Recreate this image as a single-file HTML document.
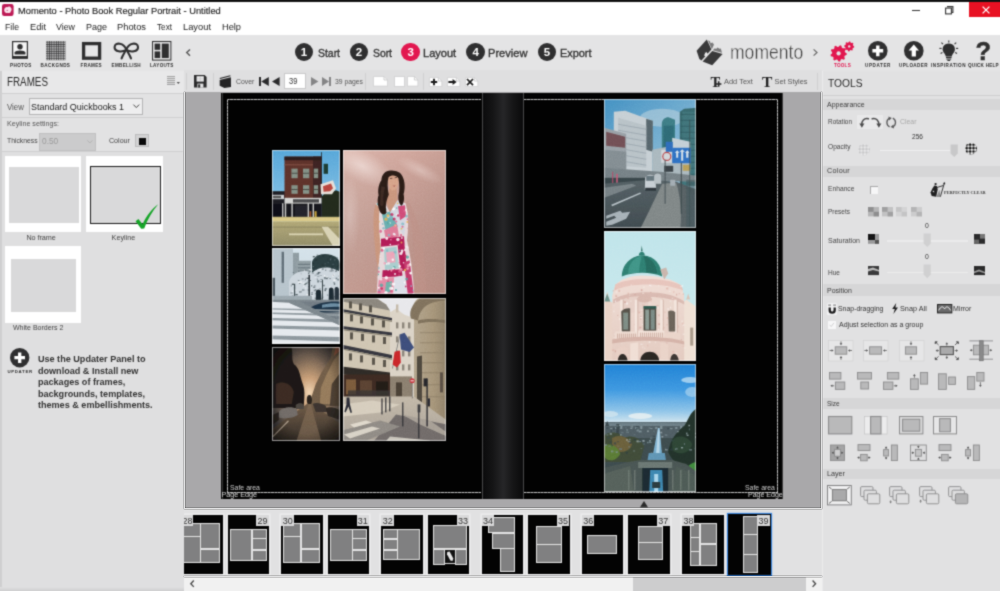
<!DOCTYPE html>
<html>
<head>
<meta charset="utf-8">
<title>Momento</title>
<style>
*{box-sizing:border-box;margin:0;padding:0}
html,body{width:1000px;height:591px;overflow:hidden;background:#e0e0e1;font-family:"Liberation Sans",sans-serif;color:#2b2b2b}
#app{position:relative;width:1000px;height:591px;overflow:hidden;filter:url(#appblur)}
.abs{position:absolute}
.t{position:absolute;white-space:nowrap;line-height:1.12;filter:grayscale(1)}
.t.c{filter:none}
svg{overflow:visible}
.ph{position:absolute;overflow:hidden;background:#888}
.ph::after{content:"";position:absolute;left:0;top:0;right:0;bottom:0;border:1.1px solid rgba(255,255,255,.55)}
.ph svg{position:absolute;left:0;top:0;overflow:hidden}
</style>
</head>
<body>
<svg width="0" height="0" style="position:absolute"><defs><filter id="appblur" x="0" y="0" width="100%" height="100%" color-interpolation-filters="sRGB"><feConvolveMatrix order="3" kernelMatrix="0.035 0.105 0.035 0.105 0.44 0.105 0.035 0.105 0.035" edgeMode="duplicate" preserveAlpha="true"/></filter></defs></svg>
<div id="app">
<!-- base -->
<div class="abs" style="left:0.0px;top:0.0px;width:1000.0px;height:1.5px;background:#111;"></div>
<div class="abs" style="left:0.0px;top:1.5px;width:1000.0px;height:33.5px;background:#ffffff;"></div>
<div class="abs" style="left:0.0px;top:35.0px;width:1000.0px;height:36.0px;background:#e4e4e5;"></div>
<div class="abs" style="left:0.0px;top:71.0px;width:184.0px;height:520.0px;background:#dfdfe0;"></div>
<div class="abs" style="left:184.0px;top:70.0px;width:638.0px;height:22.0px;background:#dfdfe0;"></div>
<div class="abs" style="left:0.0px;top:71.0px;width:184.0px;height:21.6px;background:#e8e8e9;"></div>
<div class="abs" style="left:0.0px;top:93.6px;width:184.0px;height:58.4px;background:#e2e2e3;"></div>
<div class="abs" style="left:184.6px;top:91.5px;width:636.4px;height:416.9px;background:#a9a8aa;"></div>
<div class="abs" style="left:184.0px;top:508.5px;width:638.0px;height:67.5px;background:#e1e1e2;"></div>
<div class="abs" style="left:184.0px;top:576.6px;width:638.0px;height:14.4px;background:#f1f1f1;"></div>
<div class="abs" style="left:822.0px;top:71.0px;width:178.0px;height:520.0px;background:#e1e1e2;"></div>
<!-- sec_title -->
<svg class="abs" style="left:2.0px;top:4.0px;" width="11.6" height="12.0" viewBox="0 0 11.60 12.00"><rect x="0" y="0" width="11.6" height="12" rx="2.2" fill="#bd1a55"/><path d="M2.2 6.6 C2 4 4 2.6 5.6 3.2 C6.4 2.2 8.4 2.4 8.8 3.8 C10 4.4 9.8 6.6 8.8 7.4 C8.6 8.8 6.8 9.4 5.6 8.8 C4 9.4 2.4 8.4 2.2 6.6 Z" fill="#fbe3ec"/><circle cx="5.2" cy="6.4" r="0.7" fill="#c85a84"/></svg>
<span class="t" style="left:18.2px;top:5.5px;font-size:9.8px;color:#222;transform:scaleX(0.950);transform-origin:0 50%;-webkit-text-stroke:0.15px #222;">Momento - Photo Book Regular Portrait - Untitled</span>
<span class="t" style="left:5.0px;top:21.8px;font-size:9.6px;color:#1c1c1c;transform:scaleX(0.905);transform-origin:0 50%;">File</span>
<span class="t" style="left:30.0px;top:21.8px;font-size:9.6px;color:#1c1c1c;transform:scaleX(0.967);transform-origin:0 50%;">Edit</span>
<span class="t" style="left:56.0px;top:21.8px;font-size:9.6px;color:#1c1c1c;transform:scaleX(0.921);transform-origin:0 50%;">View</span>
<span class="t" style="left:86.0px;top:21.8px;font-size:9.6px;color:#1c1c1c;transform:scaleX(0.937);transform-origin:0 50%;">Page</span>
<span class="t" style="left:117.0px;top:21.8px;font-size:9.6px;color:#1c1c1c;transform:scaleX(0.970);transform-origin:0 50%;">Photos</span>
<span class="t" style="left:157.0px;top:21.8px;font-size:9.6px;color:#1c1c1c;transform:scaleX(0.852);transform-origin:0 50%;">Text</span>
<span class="t" style="left:183.0px;top:21.8px;font-size:9.6px;color:#1c1c1c;transform:scaleX(0.972);transform-origin:0 50%;">Layout</span>
<span class="t" style="left:222.0px;top:21.8px;font-size:9.6px;color:#1c1c1c;transform:scaleX(0.962);transform-origin:0 50%;">Help</span>
<div class="abs" style="left:911.5px;top:9.6px;width:8.0px;height:1.2px;background:#333;"></div>
<svg class="abs" style="left:945.0px;top:5.5px;" width="8.5" height="8.5" viewBox="0 0 8.50 8.50"><path d="M2 0.6 H7.9 V6.5 H6.4" fill="none" stroke="#333" stroke-width="1.1"/><rect x="0.6" y="2.1" width="5.8" height="5.8" fill="#fff" stroke="#333" stroke-width="1.1"/></svg>
<div class="abs" style="left:968.8px;top:1.5px;width:31.2px;height:15.7px;background:#e81123;"></div>
<svg class="abs" style="left:981.5px;top:5.5px;" width="8.0" height="8.0" viewBox="0 0 8.00 8.00"><path d="M0.6 0.6 L7.4 7.4 M7.4 0.6 L0.6 7.4" stroke="#fff" stroke-width="1.3" fill="none"/></svg>
<!-- sec_toolbar -->
<svg class="abs" style="left:12.0px;top:41.2px;" width="16.0" height="17.8" viewBox="0 0 16.00 17.80"><rect x="0.6" y="0.6" width="14.8" height="16.6" fill="#f6f6f6" stroke="#2f2f30" stroke-width="1.2"/><circle cx="8" cy="5.8" r="2.7" fill="#2f2f30"/><path d="M2.6 13.6 V11.6 C2.6 8.8 13.4 8.8 13.4 11.6 V13.6 Z" fill="#2f2f30"/><rect x="0.6" y="15" width="14.8" height="2.6" fill="#2f2f30"/></svg>
<span class="t" style="left:10.0px;top:62.7px;font-size:4.6px;color:#2f2f30;letter-spacing:0.38px;font-weight:bold;">PHOTOS</span>
<svg class="abs" style="left:45.6px;top:41.0px;" width="19.4" height="19.0" viewBox="0 0 19.40 19.00"><defs><pattern id="chk" width="2.3" height="2.3" patternUnits="userSpaceOnUse"><polygon points="1.15,0 2.3,1.15 1.15,2.3 0,1.15" fill="#2a2a2b"/></pattern></defs><rect x="0.4" y="0.3" width="18.6" height="18.6" fill="#c4c4c5"/><rect x="0" y="0" width="19.4" height="19.2" fill="url(#chk)"/></svg>
<span class="t" style="left:40.6px;top:62.7px;font-size:4.6px;color:#2f2f30;letter-spacing:0.40px;font-weight:bold;">BACKGNDS</span>
<svg class="abs" style="left:81.6px;top:42.2px;" width="19.2" height="17.8" viewBox="0 0 19.20 17.80"><rect x="1.6" y="1.6" width="16" height="14.6" fill="#e6e6e7" stroke="#2f2f30" stroke-width="3.3"/></svg>
<span class="t" style="left:80.6px;top:62.7px;font-size:4.6px;color:#2f2f30;letter-spacing:0.33px;font-weight:bold;">FRAMES</span>
<svg class="abs" style="left:113.0px;top:41.0px;" width="26.6" height="18.5" viewBox="0 0 26.60 18.50"><g fill="none" stroke="#2f2f30" stroke-width="2.1" stroke-linecap="round" stroke-linejoin="round"><path d="M13.3 8.8 C11 1.5 2 0.8 1.6 6 C1.3 11 9 11.5 13.3 8.8 Z"/><path d="M13.3 8.8 C15.6 1.5 24.6 0.8 25 6 C25.3 11 17.6 11.5 13.3 8.8 Z"/><path d="M12.6 9.6 C11 12.5 9.6 14.5 8.6 17.4"/><path d="M14 9.6 C15.6 12.5 17 14.5 18 17.4"/></g></svg>
<span class="t" style="left:111.6px;top:62.7px;font-size:4.6px;color:#2f2f30;letter-spacing:0.31px;font-weight:bold;">EMBELLISH</span>
<svg class="abs" style="left:151.6px;top:41.0px;" width="19.4" height="19.6" viewBox="0 0 19.40 19.60"><rect x="0.5" y="0.5" width="18.4" height="18.6" fill="#e0e0e1" stroke="#2f2f30" stroke-width="1"/><rect x="2.6" y="2.6" width="5.6" height="6.2" fill="#2f2f30"/><rect x="2.6" y="10.4" width="5.6" height="6.6" fill="#2f2f30"/><rect x="9.8" y="2.6" width="7" height="14.4" fill="#2f2f30"/></svg>
<span class="t" style="left:150.0px;top:62.7px;font-size:4.6px;color:#2f2f30;letter-spacing:0.29px;font-weight:bold;">LAYOUTS</span>
<svg class="abs" style="left:186.4px;top:49.0px;" width="4.6" height="7.2" viewBox="0 0 4.60 7.20"><path d="M4 0.4 L0.7 3.6 L4 6.8" fill="none" stroke="#555" stroke-width="1.4"/></svg>
<div class="abs" style="left:294.6px;top:42.6px;width:18.8px;height:18.8px;border-radius:50%;background:#2f2f30"></div>
<span class="t" style="left:300.8px;top:45.8px;font-size:11.5px;color:#fff;font-weight:bold;">1</span>
<span class="t" style="left:318.0px;top:45.8px;font-size:11.6px;color:#333;transform:scaleX(0.898);transform-origin:0 50%;-webkit-text-stroke:0.35px #333;">Start</span>
<div class="abs" style="left:349.6px;top:42.6px;width:18.8px;height:18.8px;border-radius:50%;background:#2f2f30"></div>
<span class="t" style="left:355.8px;top:45.8px;font-size:11.5px;color:#fff;font-weight:bold;">2</span>
<span class="t" style="left:372.5px;top:45.8px;font-size:11.6px;color:#333;transform:scaleX(0.893);transform-origin:0 50%;-webkit-text-stroke:0.35px #333;">Sort</span>
<div class="abs" style="left:401.3px;top:42.6px;width:18.8px;height:18.8px;border-radius:50%;background:#e2174f"></div>
<span class="t" style="left:407.5px;top:45.8px;font-size:11.5px;color:#fff;font-weight:bold;">3</span>
<span class="t" style="left:422.8px;top:45.8px;font-size:11.6px;color:#333;transform:scaleX(0.953);transform-origin:0 50%;-webkit-text-stroke:0.35px #333;">Layout</span>
<div class="abs" style="left:466.3px;top:42.6px;width:18.8px;height:18.8px;border-radius:50%;background:#2f2f30"></div>
<span class="t" style="left:472.5px;top:45.8px;font-size:11.5px;color:#fff;font-weight:bold;">4</span>
<span class="t" style="left:488.0px;top:45.8px;font-size:11.6px;color:#333;transform:scaleX(0.957);transform-origin:0 50%;-webkit-text-stroke:0.35px #333;">Preview</span>
<div class="abs" style="left:537.6px;top:42.6px;width:18.8px;height:18.8px;border-radius:50%;background:#2f2f30"></div>
<span class="t" style="left:543.8px;top:45.8px;font-size:11.5px;color:#fff;font-weight:bold;">5</span>
<span class="t" style="left:559.5px;top:45.8px;font-size:11.6px;color:#333;transform:scaleX(0.940);transform-origin:0 50%;-webkit-text-stroke:0.35px #333;">Export</span>
<svg class="abs" style="left:695px;top:38px" width="30" height="30" viewBox="695 38 30 30"><g fill="#39393a"><path d="M696.6 50.7 L706.8 39.6 L711.4 49.6 L701.4 60.6 L699.4 59 Z"/><path d="M702.6 61.5 L712.2 50.9 L722.6 54 L712.2 65.2 Z"/></g><g fill="#7a7a7b"><path d="M708 40.6 L709.8 41 L710.6 43.2 L712.4 42.4 L714 44.6 L711.9 49.2 Z"/><path d="M712.8 50.2 L714.4 48.4 L716.4 48.8 L717.6 47.6 L719.4 48.8 L720.8 48.4 L722 52.8 Z"/></g><path d="M704 55.4 L705 53.6 L704.8 52.4 L705.9 52.8 L706.8 51.8 L707 53.2 L708 53.6 L706.6 55.4 L706.4 57 L705.2 56 Z" fill="#ececed"/></svg>
<span class="t" style="left:730.4px;top:41.7px;font-size:19.4px;color:#3c3c3d;transform:scaleX(0.905);transform-origin:0 50%;-webkit-text-stroke:0.4px #e4e4e5;">momento</span>
<svg class="abs" style="left:813.4px;top:49.3px;" width="4.8" height="7.0" viewBox="0 0 4.80 7.00"><path d="M0.6 0.4 L4 3.5 L0.6 6.6" fill="none" stroke="#666" stroke-width="1.2"/></svg>
<svg class="abs" style="left:830.5px;top:41.0px;" width="23.5" height="20.5" viewBox="0 0 23.50 20.50"><polygon points="15.80,12.40 15.68,13.82 13.76,14.64 13.28,15.68 13.88,17.67 12.87,18.68 10.88,18.08 9.84,18.56 9.02,20.48 7.60,20.60 6.46,18.86 5.36,18.56 3.50,19.50 2.33,18.68 2.57,16.62 1.92,15.68 -0.11,15.20 -0.48,13.82 1.04,12.40 1.14,11.26 -0.11,9.60 0.50,8.30 2.57,8.18 3.38,7.37 3.50,5.30 4.80,4.69 6.46,5.94 7.60,5.84 9.02,4.32 10.40,4.69 10.88,6.72 11.82,7.37 13.88,7.13 14.70,8.30 13.76,10.16 14.06,11.26" fill="#e2174f"/><circle cx="7.6" cy="12.4" r="2.1" fill="#e4e4e5"/><polygon points="23.20,5.40 23.10,6.38 21.90,6.93 21.53,7.62 21.74,8.94 20.98,9.56 19.73,9.10 18.98,9.32 18.20,10.40 17.22,10.30 16.67,9.10 15.98,8.73 14.66,8.94 14.04,8.18 14.50,6.93 14.28,6.18 13.20,5.40 13.30,4.42 14.50,3.87 14.87,3.18 14.66,1.86 15.42,1.24 16.67,1.70 17.42,1.48 18.20,0.40 19.18,0.50 19.73,1.70 20.42,2.07 21.74,1.86 22.36,2.62 21.90,3.87 22.12,4.62" fill="#e2174f"/><circle cx="18.2" cy="5.4" r="1.2" fill="#e4e4e5"/></svg>
<span class="t c" style="left:834.0px;top:62.7px;font-size:4.6px;color:#e2174f;letter-spacing:0.25px;font-weight:bold;">TOOLS</span>
<svg class="abs" style="left:868.0px;top:41.2px;" width="19.6" height="19.6" viewBox="0 0 19.60 19.60"><circle cx="9.8" cy="9.8" r="9.8" fill="#2f2f30"/><path d="M9.8 4.4 V15.2 M4.4 9.8 H15.2" stroke="#fff" stroke-width="3.4"/></svg>
<span class="t" style="left:865.0px;top:62.7px;font-size:4.6px;color:#2f2f30;letter-spacing:0.59px;font-weight:bold;">UPDATER</span>
<svg class="abs" style="left:904.0px;top:41.2px;" width="19.6" height="19.6" viewBox="0 0 19.60 19.60"><circle cx="9.8" cy="9.8" r="9.8" fill="#2f2f30"/><path d="M9.8 3.6 L15 9.6 H11.9 V15.6 H7.7 V9.6 H4.6 Z" fill="#fff"/></svg>
<span class="t" style="left:899.0px;top:62.7px;font-size:4.6px;color:#2f2f30;letter-spacing:0.40px;font-weight:bold;">UPLOADER</span>
<svg class="abs" style="left:940.0px;top:41.0px;" width="17.6" height="20.0" viewBox="0 0 17.60 20.00"><path d="M8.8 2.4 C3.6 2.4 2.2 6.6 2.8 9.4 C3.4 12 5.6 13 5.8 15.4 H11.8 C12 13 14.2 12 14.8 9.4 C15.4 6.6 14 2.4 8.8 2.4 Z" fill="#2f2f30"/><rect x="6" y="15.9" width="5.6" height="1.1" fill="#2f2f30"/><rect x="6.4" y="17.5" width="4.8" height="1.1" fill="#2f2f30"/><rect x="7.4" y="19" width="2.8" height="1" fill="#2f2f30"/><g stroke="#2f2f30" stroke-width="1.1"><path d="M8.8 -0.6 V1.4"/><path d="M1.4 1.6 L3 3.2"/><path d="M16.2 1.6 L14.6 3.2"/><path d="M-0.6 7.4 H1.6"/><path d="M16 7.4 H18.2"/><path d="M0.6 12.6 L2.4 11.6"/><path d="M17 12.6 L15.2 11.6"/></g></svg>
<span class="t" style="left:931.0px;top:62.7px;font-size:4.6px;color:#2f2f30;letter-spacing:0.52px;font-weight:bold;">INSPIRATION</span>
<span class="t" style="left:975.4px;top:36.9px;font-size:25.5px;color:#2f2f30;font-weight:bold;-webkit-text-stroke:0.5px #2f2f30;">?</span>
<span class="t" style="left:968.0px;top:62.7px;font-size:4.6px;color:#2f2f30;letter-spacing:0.26px;font-weight:bold;">QUICK HELP</span>
<!-- sec_left -->
<div class="abs" style="left:0.0px;top:71.0px;width:1.5px;height:520.0px;background:#cfcfd0;"></div>
<div class="abs" style="left:0.0px;top:587.0px;width:184.0px;height:4.0px;background:linear-gradient(#dfdfe0,#cfcfd0);"></div>
<span class="t" style="left:7.0px;top:75.5px;font-size:12.4px;color:#2a2a2a;transform:scaleX(0.793);transform-origin:0 50%;">FRAMES</span>
<svg class="abs" style="left:167.0px;top:77.0px;" width="14.0" height="9.0" viewBox="0 0 14.00 9.00"><g stroke="#858586" stroke-width="0.8"><path d="M0 -0.4 H8 M0 1.6 H8 M0 3.6 H8 M0 5.6 H8 M0 7.4 H8"/></g><path d="M9.6 5 H13 L11.3 7 Z" fill="#555"/></svg>
<div class="abs" style="left:2.0px;top:92.6px;width:181.0px;height:1.0px;background:#cfcfd0;"></div>
<span class="t" style="left:6.8px;top:103.0px;font-size:8.2px;color:#555;transform:scaleX(0.959);transform-origin:0 50%;">View</span>
<div class="abs" style="left:28.8px;top:98.2px;width:114.0px;height:17.0px;background:#eeeeef;border:1px solid #b4b4b5;"></div>
<span class="t" style="left:31.4px;top:101.8px;font-size:9.2px;color:#222;transform:scaleX(0.974);transform-origin:0 50%;">Standard Quickbooks 1</span>
<svg class="abs" style="left:133.0px;top:104.4px;" width="6.6" height="4.6" viewBox="0 0 6.60 4.60"><path d="M0.4 0.6 L3.3 3.6 L6.2 0.6" fill="none" stroke="#444" stroke-width="1"/></svg>
<div class="abs" style="left:2.0px;top:116.6px;width:181.0px;height:1.0px;background:#cfcfd0;"></div>
<span class="t" style="left:7.0px;top:119.7px;font-size:7.4px;color:#555;transform:scaleX(0.965);transform-origin:0 50%;">Keyline settings:</span>
<span class="t" style="left:7.0px;top:136.9px;font-size:8px;color:#444;transform:scaleX(0.850);transform-origin:0 50%;">Thickness</span>
<div class="abs" style="left:39.0px;top:132.8px;width:57.4px;height:17.8px;background:#cbcbcc;border:1px solid #c0c0c1;"></div>
<span class="t" style="left:42.4px;top:136.8px;font-size:8.6px;color:#9a9a9a;transform:scaleX(0.968);transform-origin:0 50%;">0.50</span>
<svg class="abs" style="left:86.6px;top:139.6px;" width="5.8" height="4.0" viewBox="0 0 5.80 4.00"><path d="M0.4 0.4 L2.9 3 L5.4 0.4" fill="none" stroke="#b0b0b0" stroke-width="0.9"/></svg>
<span class="t" style="left:109.3px;top:136.9px;font-size:8px;color:#444;transform:scaleX(0.887);transform-origin:0 50%;">Colour</span>
<div class="abs" style="left:135.3px;top:134.4px;width:13.5px;height:13.0px;background:#d2d2d3;border:1px solid #bdbdbe;"></div>
<div class="abs" style="left:138.7px;top:137.8px;width:7.3px;height:7.2px;background:#0a0a0a;"></div>
<div class="abs" style="left:2.0px;top:151.4px;width:181.0px;height:1.0px;background:#cfcfd0;"></div>
<div class="abs" style="left:5.0px;top:156.4px;width:76.2px;height:76.1px;background:#ffffff;"></div>
<div class="abs" style="left:8.5px;top:166.6px;width:70.0px;height:56.8px;background:#d9d9da;"></div>
<span class="t" style="left:26.4px;top:233.8px;font-size:7.2px;color:#444;letter-spacing:-0.03px;">No frame</span>
<div class="abs" style="left:86.3px;top:156.4px;width:77.1px;height:76.1px;background:#ffffff;"></div>
<div class="abs" style="left:90.3px;top:165.9px;width:70.4px;height:58.1px;background:#d9d9da;border:1px solid #1a1a1a;"></div>
<span class="t" style="left:111.6px;top:233.8px;font-size:7.2px;color:#444;letter-spacing:0.01px;">Keyline</span>
<svg class="abs" style="left:134.6px;top:203.8px;" width="23.8" height="25.2" viewBox="0 0 23.80 25.20"><path d="M0.6 17.2 L3.4 15 L7.6 20.2 C11.6 11.6 17 4.6 23.2 0.2 C17.6 7 12.4 15 9.2 24.6 L6.2 24.8 Z" fill="#16a528"/></svg>
<div class="abs" style="left:5.0px;top:246.0px;width:76.2px;height:76.9px;background:#ffffff;"></div>
<div class="abs" style="left:11.2px;top:258.6px;width:64.8px;height:53.4px;background:#d9d9da;"></div>
<span class="t" style="left:12.9px;top:324.2px;font-size:7.2px;color:#444;transform:scaleX(0.976);transform-origin:0 50%;">White Borders 2</span>
<svg class="abs" style="left:10.0px;top:348.0px;" width="19.4" height="19.4" viewBox="0 0 19.40 19.40"><circle cx="9.7" cy="9.7" r="9.7" fill="#2f2f30"/><path d="M9.7 4.4 V15 M4.4 9.7 H15" stroke="#fff" stroke-width="3.3"/></svg>
<span class="t" style="left:7.4px;top:369.7px;font-size:4.4px;color:#2f2f30;letter-spacing:0.64px;font-weight:bold;">UPDATER</span>
<span class="t" style="left:37.9px;top:354.1px;font-size:9.1px;color:#333;font-weight:bold;">Use the Updater Panel to</span>
<span class="t" style="left:37.9px;top:365.6px;font-size:9.1px;color:#333;font-weight:bold;">download &amp; Install new</span>
<span class="t" style="left:37.9px;top:377.1px;font-size:9.1px;color:#333;font-weight:bold;">packages of frames,</span>
<span class="t" style="left:37.9px;top:388.6px;font-size:9.1px;color:#333;font-weight:bold;">backgrounds, templates,</span>
<span class="t" style="left:37.9px;top:400.1px;font-size:9.1px;color:#333;font-weight:bold;">themes &amp; embellishments.</span>
<!-- sec_canvasbar -->
<div class="abs" style="left:186.0px;top:73.0px;width:1.0px;height:17.0px;background:#d0d0d1;"></div>
<div class="abs" style="left:213.4px;top:73.0px;width:1.0px;height:17.0px;background:#d0d0d1;"></div>
<svg class="abs" style="left:194.4px;top:75.0px;" width="12.6" height="12.6" viewBox="0 0 12.60 12.60"><path d="M0 0 H10.6 L12.6 2 V12.6 H0 Z" fill="#2a2a2b"/><rect x="2.6" y="1.2" width="7.2" height="5.4" fill="#ececed"/><path d="M6.2 1.2 V6.6 M2.6 3.9 H9.8" stroke="#b4b4b5" stroke-width="0.5"/><rect x="3.4" y="8.6" width="6" height="4" fill="#e4e4e5"/><rect x="4.2" y="9.4" width="2" height="3.2" fill="#2a2a2b"/></svg>
<svg class="abs" style="left:218px;top:74px" width="16" height="16" viewBox="218 74 16 16"><path d="M219.7 80 L230.9 77.3 L231 87 L224.4 88 L219.7 85.8 Z" fill="#232324"/><path d="M219.8 78.5 L230.4 75.7" stroke="#232324" stroke-width="1.1" fill="none"/></svg>
<span class="t" style="left:235.6px;top:77.8px;font-size:7.4px;color:#555;transform:scaleX(0.932);transform-origin:0 50%;">Cover</span>
<svg class="abs" style="left:259.4px;top:77.0px;" width="9.8" height="9.0" viewBox="0 0 9.80 9.00"><rect x="0" y="0" width="2" height="9" fill="#2a2a2b"/><path d="M9.8 0 V9 L2.2 4.5 Z" fill="#2a2a2b"/></svg>
<svg class="abs" style="left:272.4px;top:77.0px;" width="7.6" height="9.0" viewBox="0 0 7.60 9.00"><path d="M7.6 0 V9 L0 4.5 Z" fill="#2a2a2b"/></svg>
<div class="abs" style="left:283.6px;top:72.6px;width:22.8px;height:16.4px;background:#ffffff;border:1px solid #c9c9ca;"></div>
<span class="t" style="left:288.6px;top:76.2px;font-size:9.2px;color:#333;transform:scaleX(0.821);transform-origin:0 50%;">39</span>
<svg class="abs" style="left:310.6px;top:77.0px;" width="7.4" height="9.0" viewBox="0 0 7.40 9.00"><path d="M0 0 V9 L7.4 4.5 Z" fill="#858586"/></svg>
<svg class="abs" style="left:321.6px;top:77.0px;" width="9.0" height="9.0" viewBox="0 0 9.00 9.00"><path d="M0 0 V9 L7 4.5 Z" fill="#858586"/><rect x="7" y="0" width="2" height="9" fill="#858586"/></svg>
<span class="t" style="left:335.0px;top:77.9px;font-size:6.8px;color:#555;letter-spacing:0.00px;">39 pages</span>
<div class="abs" style="left:365.4px;top:73.0px;width:1.0px;height:17.0px;background:#d0d0d1;"></div>
<svg class="abs" style="left:373.3px;top:76.0px;" width="15.0" height="10.6" viewBox="0 0 15.00 10.60"><path d="M0.5 0.5 H11 L14.5 4 V10.1 H0.5 Z" fill="#ffffff" stroke="#cfcfd0" stroke-width="0.8"/><path d="M11 0.5 V4 H14.5" fill="none" stroke="#c4c4c5" stroke-width="0.8"/></svg>
<div class="abs" style="left:394.3px;top:76.0px;width:10.7px;height:10.6px;background:#ffffff;border:0.8px solid #d4d4d5;"></div>
<svg class="abs" style="left:407.4px;top:76.0px;" width="11.4" height="10.6" viewBox="0 0 11.40 10.60"><path d="M0.5 0.5 H7.4 L10.9 4 V10.1 H0.5 Z" fill="#ffffff" stroke="#cfcfd0" stroke-width="0.8"/><path d="M7.4 0.5 V4 H10.9" fill="none" stroke="#c4c4c5" stroke-width="0.8"/></svg>
<div class="abs" style="left:423.4px;top:73.0px;width:1.0px;height:17.0px;background:#d0d0d1;"></div>
<svg class="abs" style="left:429.3px;top:77.0px;" width="13.3" height="10.0" viewBox="0 0 13.30 10.00"><path d="M0.5 0.5 H9.3 L12.8 4 V9.5 H0.5 Z" fill="#ffffff" stroke="#cfcfd0" stroke-width="0.8"/><path d="M9.3 0.5 V4 H12.8" fill="none" stroke="#c4c4c5" stroke-width="0.8"/><path d="M1.8 5 H8.2 M5 1.8 V8.2" stroke="#1a1a1a" stroke-width="1.9"/></svg>
<svg class="abs" style="left:447.0px;top:77.0px;" width="13.3" height="10.0" viewBox="0 0 13.30 10.00"><path d="M0.5 0.5 H9.3 L12.8 4 V9.5 H0.5 Z" fill="#ffffff" stroke="#cfcfd0" stroke-width="0.8"/><path d="M9.3 0.5 V4 H12.8" fill="none" stroke="#c4c4c5" stroke-width="0.8"/><path d="M1.4 4 H5.6 V2 L9.6 5 L5.6 8 V6 H1.4 Z" fill="#1a1a1a"/></svg>
<svg class="abs" style="left:464.6px;top:77.0px;" width="13.3" height="10.0" viewBox="0 0 13.30 10.00"><path d="M0.5 0.5 H9.3 L12.8 4 V9.5 H0.5 Z" fill="#ffffff" stroke="#cfcfd0" stroke-width="0.8"/><path d="M9.3 0.5 V4 H12.8" fill="none" stroke="#c4c4c5" stroke-width="0.8"/><path d="M2 2 L8 8.2 M8 2 L2 8.2" stroke="#1a1a1a" stroke-width="1.7"/></svg>
<span class="t" style="left:710.4px;top:73.5px;font-size:14.5px;color:#222;font-weight:bold;font-family:'Liberation Serif',serif;">T</span>
<svg class="abs" style="left:716.4px;top:81.0px;" width="5.6" height="6.0" viewBox="0 0 5.60 6.00"><path d="M0 3 H5.4 M2.7 0.3 V5.7" stroke="#222" stroke-width="1.5"/></svg>
<span class="t" style="left:724.0px;top:77.8px;font-size:7.4px;color:#555;letter-spacing:0.04px;">Add Text</span>
<span class="t" style="left:762.0px;top:72.9px;font-size:15.5px;color:#222;font-weight:bold;font-family:'Liberation Serif',serif;">T</span>
<span class="t" style="left:774.5px;top:77.8px;font-size:7.4px;color:#555;letter-spacing:-0.03px;">Set Styles</span>
<div class="abs" style="left:817.0px;top:73.0px;width:1.0px;height:17.0px;background:#cfcfd0;"></div>
<!-- sec_canvas -->
<div class="abs" style="left:221.0px;top:92.6px;width:562.0px;height:406.2px;background:#020202;"></div>
<div class="abs" style="left:482.4px;top:92.6px;width:40.2px;height:406.2px;background:linear-gradient(90deg,#0a0a0b 0%,#141415 25%,#262628 52%,#161617 75%,#0a0a0b 100%);"></div>
<div class="abs" style="left:481.5px;top:92.6px;width:1.0px;height:406.2px;background:#4a4a4b;"></div>
<div class="abs" style="left:522.6px;top:92.6px;width:1.0px;height:406.2px;background:#4a4a4b;"></div>
<div class="abs" style="left:227.4px;top:98.6px;width:254.1px;height:1.0px;background:repeating-linear-gradient(90deg,#c2c2c2 0 2.4px,#7a7a7a 2.4px 3.4px);"></div>
<div class="abs" style="left:227.4px;top:492.0px;width:254.1px;height:1.0px;background:repeating-linear-gradient(90deg,#c2c2c2 0 2.4px,#7a7a7a 2.4px 3.4px);"></div>
<div class="abs" style="left:227.0px;top:98.6px;width:1.0px;height:394.4px;background:repeating-linear-gradient(0deg,#c2c2c2 0 2.4px,#7a7a7a 2.4px 3.4px);"></div>
<div class="abs" style="left:221.5px;top:93.0px;width:0.8px;height:405.5px;background:#3a3a3a;"></div>
<div class="abs" style="left:523.6px;top:98.6px;width:254.4px;height:1.0px;background:repeating-linear-gradient(90deg,#c2c2c2 0 2.4px,#7a7a7a 2.4px 3.4px);"></div>
<div class="abs" style="left:523.6px;top:492.0px;width:254.4px;height:1.0px;background:repeating-linear-gradient(90deg,#c2c2c2 0 2.4px,#7a7a7a 2.4px 3.4px);"></div>
<div class="abs" style="left:777.4px;top:98.6px;width:1.0px;height:394.4px;background:repeating-linear-gradient(0deg,#c2c2c2 0 2.4px,#7a7a7a 2.4px 3.4px);"></div>
<div class="abs" style="left:781.8px;top:93.0px;width:0.8px;height:405.5px;background:#3a3a3a;"></div>
<span class="t" style="left:229.5px;top:483.6px;font-size:7.2px;color:#cfcfcf;transform:scaleX(0.961);transform-origin:0 50%;">Safe area</span>
<span class="t" style="left:221.6px;top:490.8px;font-size:7.2px;color:#d8d8d8;letter-spacing:-0.03px;">Page Edge</span>
<span class="t" style="left:744.7px;top:483.6px;font-size:7.2px;color:#cfcfcf;transform:scaleX(0.961);transform-origin:0 50%;">Safe area</span>
<span class="t" style="left:747.8px;top:490.8px;font-size:7.2px;color:#d8d8d8;transform:scaleX(0.977);transform-origin:0 50%;">Page Edge</span>
<svg class="abs" style="left:639.6px;top:501.0px;" width="8.0" height="6.2" viewBox="0 0 8.00 6.20"><path d="M0 6.2 L4 0 L8 6.2 Z" fill="#2a2a2a"/></svg>
<div class="ph" style="left:272.0px;top:149.8px;width:68.0px;height:95.8px;background:#888"><svg width="68.0" height="95.8" viewBox="272.0 149.8 68.0 95.8"><defs><filter id="b272_149" x="-5%" y="-5%" width="110%" height="110%"><feGaussianBlur stdDeviation="0.45"/></filter><filter id="n272_149" x="0" y="0" width="100%" height="100%"><feTurbulence type="fractalNoise" baseFrequency="0.9" numOctaves="2" seed="421"/><feColorMatrix type="matrix" values="0 0 0 0 0.5  0 0 0 0 0.5  0 0 0 0 0.5  1.6 0 0 0 -0.55"/><feGaussianBlur stdDeviation="0.35"/></filter></defs><g filter="url(#b272_149)"><defs><linearGradient id="p1sky" x1="0" y1="0" x2="0" y2="1"><stop offset="0" stop-color="#55a5d8"/><stop offset="1" stop-color="#90c8e8"/></linearGradient><linearGradient id="p1road" x1="0" y1="0" x2="0" y2="1"><stop offset="0" stop-color="#b0a674"/><stop offset="1" stop-color="#8f8a68"/></linearGradient></defs><rect x="271.0" y="149.0" width="70.0" height="73.0" fill="url(#p1sky)" /><path d="M322 196 C326 190 332 193 336 190 L341 192 V218 H322 Z" fill="#202c1e" /><rect x="271.0" y="191.0" width="14.0" height="27.0" fill="#1d1e22" /><rect x="271.0" y="194.6" width="13.0" height="4.4" fill="#c9cdd0" /><rect x="272.6" y="195.6" width="8.4" height="2.4" fill="#555" /><rect x="273.0" y="204.0" width="9.0" height="12.0" fill="#0e0f12" /><rect x="282.0" y="203.0" width="1.4" height="14.0" fill="#b9b9b9" /><rect x="284.5" y="156.4" width="37.0" height="41.6" fill="#5d312b" /><rect x="313.0" y="156.4" width="8.5" height="41.6" fill="#3c2220" /><rect x="284.5" y="156.4" width="37.0" height="3.6" fill="#2a1a1a" /><rect x="284.5" y="164.0" width="28.5" height="1.2" fill="#7a4a40" /><rect x="291.4" y="168.4" width="6.3" height="9.6" fill="#828f84" /><rect x="291.4" y="185.0" width="6.3" height="8.6" fill="#828f84" /><rect x="291.4" y="172.6" width="6.3" height="0.8" fill="#3a3a36" /><rect x="291.4" y="189.0" width="6.3" height="0.8" fill="#3a3a36" /><rect x="303.0" y="168.4" width="6.3" height="9.6" fill="#828f84" /><rect x="303.0" y="185.0" width="6.3" height="8.6" fill="#828f84" /><rect x="303.0" y="172.6" width="6.3" height="0.8" fill="#3a3a36" /><rect x="303.0" y="189.0" width="6.3" height="0.8" fill="#3a3a36" /><rect x="313.8" y="168.4" width="4.4" height="9.6" fill="#828f84" /><rect x="313.8" y="185.0" width="4.4" height="8.6" fill="#828f84" /><rect x="313.8" y="172.6" width="4.4" height="0.8" fill="#3a3a36" /><rect x="313.8" y="189.0" width="4.4" height="0.8" fill="#3a3a36" /><rect x="321.2" y="152.0" width="0.8" height="66.0" fill="#222" /><rect x="323.6" y="163.6" width="4.4" height="10.0" fill="#1f3a30" /><path d="M320.5 184 L333 180 L336 188 L332 194 L321 194 Z" fill="#e6dfd8" /><path d="M323 186 L331 183.4 L333 188 L330 191 L323.6 191.6 Z" fill="#b8443c" /><rect x="284.5" y="198.0" width="37.0" height="20.0" fill="#17171b" /><rect x="284.5" y="197.6" width="37.0" height="5.8" fill="#d4d4d2" /><rect x="293.0" y="199.0" width="26.0" height="3.4" fill="#4a4a4c" /><rect x="284.8" y="203.0" width="1.4" height="15.0" fill="#c8c8c6" /><rect x="291.4" y="203.0" width="1.4" height="15.0" fill="#c8c8c6" /><rect x="307.6" y="203.0" width="1.4" height="15.0" fill="#c8c8c6" /><rect x="312.6" y="203.0" width="1.4" height="15.0" fill="#c8c8c6" /><rect x="295.0" y="205.0" width="12.0" height="12.0" fill="#23242a" /><rect x="314.6" y="211.0" width="2.0" height="6.6" fill="#c8a23a" /><rect x="309.6" y="211.0" width="1.6" height="6.6" fill="#a0522d" /><rect x="271.0" y="217.2" width="70.0" height="4.4" fill="#dac987" /><rect x="271.0" y="216.6" width="70.0" height="1.2" fill="#c9b979" /><rect x="271.0" y="221.4" width="70.0" height="25.6" fill="url(#p1road)" /><rect x="271.0" y="226.4" width="70.0" height="1.0" fill="#8a8460" /><rect x="289.0" y="233.2" width="34.0" height="1.8" fill="#d9d3b0" /><path d="M321.6 226.6 L328 226.6 L341 240 V246 H333 Z" fill="#d8d2b4" /></g><rect x="272.0" y="149.8" width="68.0" height="95.8" filter="url(#n272_149)" opacity="0.22" style="mix-blend-mode:overlay"/></svg></div>
<div class="ph" style="left:343.0px;top:149.8px;width:102.6px;height:144.6px;background:#888"><svg width="102.6" height="144.6" viewBox="343.0 149.8 102.6 144.6"><defs><filter id="b343_149" x="-5%" y="-5%" width="110%" height="110%"><feGaussianBlur stdDeviation="0.45"/></filter><filter id="n343_149" x="0" y="0" width="100%" height="100%"><feTurbulence type="fractalNoise" baseFrequency="0.9" numOctaves="2" seed="492"/><feColorMatrix type="matrix" values="0 0 0 0 0.5  0 0 0 0 0.5  0 0 0 0 0.5  1.6 0 0 0 -0.55"/><feGaussianBlur stdDeviation="0.35"/></filter></defs><g filter="url(#b343_149)"><defs><linearGradient id="p2bg" x1="0" y1="0" x2="1" y2="0"><stop offset="0" stop-color="#dab4aa"/><stop offset="0.6" stop-color="#d2a79d"/><stop offset="1" stop-color="#c79d93"/></linearGradient><radialGradient id="p2hl" cx="0.5" cy="0.5" r="0.5"><stop offset="0" stop-color="#f0d8d2"/><stop offset="1" stop-color="#f0d8d200"/></radialGradient><linearGradient id="p2dk" x1="0" y1="0" x2="0" y2="1"><stop offset="0" stop-color="#00000000"/><stop offset="1" stop-color="#7a4a4040"/></linearGradient><clipPath id="p2dress"><path d="M375.6 203.6 L383 199.6 L390 212 L397 199.6 L405.6 203 C408.6 214 408.6 228 407 240 C410.6 256 413.4 276 414.4 296 H376.6 C377.2 280 378.6 262 380.8 246 C378.8 232 378.4 216 379.8 208 Z"/></clipPath></defs><rect x="342.0" y="149.0" width="105.0" height="147.0" fill="url(#p2bg)" /><ellipse cx="362" cy="166" rx="34" ry="16" fill="url(#p2hl)" transform="rotate(28 362 166)"/><ellipse cx="420" cy="170" rx="26" ry="8" fill="url(#p2hl)" opacity="0.55" transform="rotate(28 420 170)"/><ellipse cx="350" cy="215" rx="10" ry="40" fill="url(#p2hl)" opacity="0.6"/><rect x="342.0" y="149.0" width="105.0" height="147.0" fill="url(#p2dk)" /><path d="M404 205 C412 215 416 240 414 296 H426 C426 250 420 220 408 200 Z" fill="#bd9086"  opacity="0.6"/><path d="M375.6 204 C372.6 212 373.2 230 375 246 C375.6 256 376.6 262 378.2 268 L381.6 266 C380.6 252 380.6 236 381.4 222 L383 206 Z" fill="#c9957b" /><path d="M375.6 203.6 L383 199.6 L390 212 L397 199.6 L405.6 203 C408.6 214 408.6 228 407 240 C410.6 256 413.4 276 414.4 296 H376.6 C377.2 280 378.6 262 380.8 246 C378.8 232 378.4 216 379.8 208 Z" fill="#e6d8da" /><g clip-path="url(#p2dress)"><path d="M382 214 L393 210 L398 226 L386 232 Z" fill="#69aeb0" /><path d="M384 230 L397 224 L399 236 L386 240 Z" fill="#dd7b98" /><path d="M390 212 L397 200 L404 204 C406 212 406 226 404 236 L398 226 Z" fill="#d3d6e0" /><path d="M398 206 L405 205 L406 216 L400 220 Z" fill="#cf4b77" /><path d="M381 238.6 L404 236 L404.6 244 L380.8 246.6 Z" fill="#b21f56" /><path d="M397.6 244 L404.4 243.6 L407 270 L400.6 271 Z" fill="#b21f56" /><path d="M384 248 L396.6 246.6 L399 268 L385 270 Z" fill="#a9cccd" /><path d="M386 252 L394 251 L395.6 262 L387 263 Z" fill="#eaa6ba" /><path d="M382.6 270 L401.6 269 L402.6 276 L382.2 277 Z" fill="#b21f56" /><path d="M379 278 L394 277 L393 296 H377 Z" fill="#e58aa4" /><path d="M394 277 L404 275 L410 296 H394 Z" fill="#dcdfe8" /><path d="M404 262 L409.6 260 L414 296 H408 Z" fill="#c43a6c" /><path d="M386 282 L392 281 L391 292 L385 292 Z" fill="#6fb0a8" /><circle cx="388.3" cy="216.2" r="1.4" fill="#f4e9ec" opacity="0.85"/><circle cx="407.2" cy="210.8" r="1.3" fill="#ffffff" opacity="0.85"/><circle cx="384.2" cy="210.1" r="1.1" fill="#58a39f" opacity="0.85"/><circle cx="379.4" cy="241.9" r="1.5" fill="#f4e9ec" opacity="0.85"/><circle cx="412.0" cy="261.3" r="1.3" fill="#ffffff" opacity="0.85"/><circle cx="397.9" cy="239.3" r="1.7" fill="#ffffff" opacity="0.85"/><circle cx="397.2" cy="214.5" r="1.1" fill="#ffffff" opacity="0.85"/><circle cx="380.5" cy="231.0" r="1.5" fill="#d85c86" opacity="0.85"/><circle cx="379.9" cy="255.7" r="0.9" fill="#f4e9ec" opacity="0.85"/><circle cx="396.8" cy="207.9" r="0.8" fill="#58a39f" opacity="0.85"/><circle cx="394.9" cy="252.0" r="1.5" fill="#7fb7c4" opacity="0.85"/><circle cx="398.3" cy="244.6" r="1.0" fill="#d85c86" opacity="0.85"/><circle cx="402.6" cy="224.9" r="1.3" fill="#ffffff" opacity="0.85"/><circle cx="394.8" cy="234.3" r="1.1" fill="#f0f0f4" opacity="0.85"/><circle cx="413.2" cy="213.1" r="1.1" fill="#c2285c" opacity="0.85"/><circle cx="381.8" cy="248.0" r="0.7" fill="#f4e9ec" opacity="0.85"/><circle cx="405.1" cy="255.9" r="1.6" fill="#c2285c" opacity="0.85"/><circle cx="388.9" cy="234.9" r="1.2" fill="#7fb7c4" opacity="0.85"/><circle cx="378.6" cy="210.8" r="1.0" fill="#f4e9ec" opacity="0.85"/><circle cx="378.3" cy="267.9" r="1.3" fill="#7fb7c4" opacity="0.85"/><circle cx="386.8" cy="238.3" r="1.4" fill="#ffffff" opacity="0.85"/><circle cx="411.7" cy="235.4" r="1.3" fill="#7fb7c4" opacity="0.85"/><circle cx="378.2" cy="274.2" r="0.8" fill="#58a39f" opacity="0.85"/><circle cx="391.1" cy="288.2" r="1.2" fill="#d85c86" opacity="0.85"/><circle cx="393.1" cy="253.6" r="1.6" fill="#f2a0b6" opacity="0.85"/><circle cx="408.8" cy="228.2" r="1.1" fill="#c2285c" opacity="0.85"/><circle cx="401.9" cy="237.8" r="0.9" fill="#f4e9ec" opacity="0.85"/><circle cx="382.7" cy="223.8" r="0.9" fill="#7fb7c4" opacity="0.85"/><circle cx="407.6" cy="219.1" r="1.0" fill="#d85c86" opacity="0.85"/><circle cx="391.9" cy="236.7" r="1.3" fill="#d85c86" opacity="0.85"/><circle cx="402.2" cy="250.5" r="1.3" fill="#ffffff" opacity="0.85"/><circle cx="393.4" cy="283.9" r="1.7" fill="#ffffff" opacity="0.85"/><circle cx="390.9" cy="239.5" r="0.8" fill="#f2a0b6" opacity="0.85"/><circle cx="378.4" cy="208.3" r="0.9" fill="#d85c86" opacity="0.85"/><circle cx="380.2" cy="258.5" r="0.8" fill="#f0f0f4" opacity="0.85"/><circle cx="381.7" cy="211.5" r="1.1" fill="#ffffff" opacity="0.85"/><circle cx="378.7" cy="221.5" r="1.1" fill="#e9b34f" opacity="0.85"/><circle cx="412.3" cy="258.6" r="1.2" fill="#f4e9ec" opacity="0.85"/><circle cx="408.3" cy="295.4" r="1.2" fill="#7fb7c4" opacity="0.85"/><circle cx="387.9" cy="215.5" r="1.4" fill="#e9b34f" opacity="0.85"/><circle cx="394.2" cy="267.1" r="1.2" fill="#58a39f" opacity="0.85"/><circle cx="412.1" cy="251.7" r="0.8" fill="#ffffff" opacity="0.85"/><circle cx="410.7" cy="273.3" r="1.0" fill="#f4e9ec" opacity="0.85"/><circle cx="402.5" cy="226.5" r="1.1" fill="#d85c86" opacity="0.85"/><circle cx="389.5" cy="222.9" r="1.2" fill="#ffffff" opacity="0.85"/><circle cx="388.5" cy="223.0" r="1.5" fill="#58a39f" opacity="0.85"/><circle cx="406.6" cy="278.9" r="1.4" fill="#58a39f" opacity="0.85"/><circle cx="383.6" cy="248.3" r="1.4" fill="#ffffff" opacity="0.85"/><circle cx="406.0" cy="246.4" r="0.9" fill="#f0f0f4" opacity="0.85"/><circle cx="412.3" cy="244.0" r="1.6" fill="#c2285c" opacity="0.85"/><circle cx="412.3" cy="236.3" r="0.9" fill="#58a39f" opacity="0.85"/><circle cx="393.9" cy="233.7" r="1.2" fill="#f0f0f4" opacity="0.85"/><circle cx="407.9" cy="247.1" r="1.4" fill="#f4e9ec" opacity="0.85"/><circle cx="407.7" cy="213.3" r="1.1" fill="#58a39f" opacity="0.85"/><circle cx="394.2" cy="218.8" r="1.5" fill="#c2285c" opacity="0.85"/><circle cx="379.3" cy="290.9" r="1.4" fill="#7fb7c4" opacity="0.85"/><circle cx="391.3" cy="291.0" r="1.4" fill="#d85c86" opacity="0.85"/><circle cx="413.7" cy="204.6" r="1.3" fill="#7fb7c4" opacity="0.85"/><circle cx="406.6" cy="215.7" r="1.5" fill="#7fb7c4" opacity="0.85"/><circle cx="401.0" cy="234.9" r="1.2" fill="#d85c86" opacity="0.85"/><circle cx="376.8" cy="277.1" r="1.4" fill="#f4e9ec" opacity="0.85"/><circle cx="396.0" cy="289.8" r="1.1" fill="#58a39f" opacity="0.85"/><circle cx="407.4" cy="221.8" r="1.0" fill="#e9b34f" opacity="0.85"/><circle cx="395.0" cy="273.8" r="1.0" fill="#ffffff" opacity="0.85"/><circle cx="391.9" cy="214.3" r="1.6" fill="#c2285c" opacity="0.85"/><circle cx="410.1" cy="264.3" r="1.5" fill="#ffffff" opacity="0.85"/><circle cx="392.0" cy="288.3" r="1.2" fill="#ffffff" opacity="0.85"/><circle cx="381.8" cy="250.0" r="1.6" fill="#d85c86" opacity="0.85"/><circle cx="399.1" cy="274.9" r="0.8" fill="#d85c86" opacity="0.85"/><circle cx="394.0" cy="270.2" r="1.3" fill="#c2285c" opacity="0.85"/><circle cx="401.9" cy="251.9" r="1.2" fill="#f4e9ec" opacity="0.85"/><circle cx="409.6" cy="207.3" r="0.9" fill="#ffffff" opacity="0.85"/><circle cx="405.3" cy="249.7" r="1.3" fill="#f4e9ec" opacity="0.85"/><circle cx="392.8" cy="259.6" r="1.2" fill="#ffffff" opacity="0.85"/><circle cx="383.6" cy="228.1" r="1.2" fill="#7fb7c4" opacity="0.85"/><circle cx="395.3" cy="225.3" r="1.2" fill="#e9b34f" opacity="0.85"/><circle cx="411.1" cy="285.9" r="0.9" fill="#7fb7c4" opacity="0.85"/><circle cx="381.2" cy="213.4" r="1.1" fill="#f4e9ec" opacity="0.85"/><circle cx="401.5" cy="242.3" r="0.9" fill="#e9b34f" opacity="0.85"/><circle cx="405.8" cy="286.3" r="0.9" fill="#c2285c" opacity="0.85"/><circle cx="381.4" cy="285.0" r="1.7" fill="#58a39f" opacity="0.85"/><circle cx="404.4" cy="210.8" r="1.6" fill="#d85c86" opacity="0.85"/><circle cx="413.6" cy="280.2" r="0.9" fill="#f2a0b6" opacity="0.85"/><circle cx="413.8" cy="240.0" r="1.1" fill="#c2285c" opacity="0.85"/><circle cx="388.1" cy="269.9" r="0.7" fill="#ffffff" opacity="0.85"/><circle cx="393.4" cy="268.1" r="1.1" fill="#ffffff" opacity="0.85"/><circle cx="399.7" cy="250.2" r="0.8" fill="#58a39f" opacity="0.85"/><circle cx="412.9" cy="211.8" r="1.0" fill="#ffffff" opacity="0.85"/><circle cx="410.4" cy="219.1" r="1.5" fill="#f2a0b6" opacity="0.85"/><circle cx="408.3" cy="265.5" r="1.6" fill="#f2a0b6" opacity="0.85"/><circle cx="381.7" cy="288.4" r="1.3" fill="#c2285c" opacity="0.85"/><circle cx="379.4" cy="207.4" r="1.4" fill="#f2a0b6" opacity="0.85"/><circle cx="410.0" cy="227.3" r="0.7" fill="#f4e9ec" opacity="0.85"/><circle cx="406.5" cy="209.9" r="1.6" fill="#f4e9ec" opacity="0.85"/><circle cx="386.0" cy="213.4" r="0.7" fill="#ffffff" opacity="0.85"/><circle cx="391.9" cy="288.1" r="1.3" fill="#ffffff" opacity="0.85"/><circle cx="396.0" cy="224.4" r="0.8" fill="#d85c86" opacity="0.85"/><circle cx="386.0" cy="219.0" r="1.6" fill="#e9b34f" opacity="0.85"/><circle cx="396.2" cy="221.4" r="1.1" fill="#d85c86" opacity="0.85"/><circle cx="386.3" cy="277.5" r="1.7" fill="#ffffff" opacity="0.85"/><circle cx="376.6" cy="270.9" r="1.3" fill="#58a39f" opacity="0.85"/><circle cx="395.5" cy="225.1" r="1.1" fill="#f2a0b6" opacity="0.85"/><circle cx="400.9" cy="253.3" r="1.6" fill="#ffffff" opacity="0.85"/><circle cx="387.7" cy="222.2" r="0.9" fill="#58a39f" opacity="0.85"/><circle cx="407.6" cy="268.4" r="1.3" fill="#f2a0b6" opacity="0.85"/><circle cx="413.6" cy="294.3" r="1.5" fill="#ffffff" opacity="0.85"/><circle cx="378.7" cy="271.6" r="1.0" fill="#d85c86" opacity="0.85"/><circle cx="378.1" cy="264.5" r="1.1" fill="#ffffff" opacity="0.85"/><circle cx="401.5" cy="228.5" r="0.9" fill="#e9b34f" opacity="0.85"/><circle cx="377.7" cy="219.4" r="1.0" fill="#ffffff" opacity="0.85"/><circle cx="386.0" cy="292.4" r="1.7" fill="#ffffff" opacity="0.85"/><circle cx="388.3" cy="205.2" r="1.6" fill="#58a39f" opacity="0.85"/><circle cx="389.6" cy="202.1" r="1.1" fill="#7fb7c4" opacity="0.85"/><circle cx="386.6" cy="263.7" r="0.9" fill="#ffffff" opacity="0.85"/><circle cx="379.5" cy="278.8" r="0.8" fill="#f0f0f4" opacity="0.85"/><circle cx="377.6" cy="204.1" r="1.0" fill="#58a39f" opacity="0.85"/><circle cx="379.2" cy="292.0" r="1.6" fill="#d85c86" opacity="0.85"/><circle cx="401.0" cy="269.3" r="1.6" fill="#f2a0b6" opacity="0.85"/><circle cx="405.0" cy="269.7" r="1.2" fill="#e9b34f" opacity="0.85"/><circle cx="403.5" cy="262.5" r="0.7" fill="#ffffff" opacity="0.85"/><circle cx="399.8" cy="271.0" r="1.5" fill="#d85c86" opacity="0.85"/><circle cx="410.6" cy="272.8" r="1.3" fill="#ffffff" opacity="0.85"/><circle cx="407.4" cy="256.9" r="1.6" fill="#58a39f" opacity="0.85"/><circle cx="379.2" cy="205.9" r="1.3" fill="#f4e9ec" opacity="0.85"/><circle cx="390.3" cy="244.4" r="0.8" fill="#ffffff" opacity="0.85"/><circle cx="399.8" cy="266.0" r="1.2" fill="#ffffff" opacity="0.85"/><circle cx="393.4" cy="208.6" r="1.6" fill="#ffffff" opacity="0.85"/><circle cx="379.5" cy="251.4" r="1.4" fill="#7fb7c4" opacity="0.85"/><circle cx="385.6" cy="209.0" r="1.0" fill="#58a39f" opacity="0.85"/><circle cx="384.8" cy="263.1" r="1.2" fill="#f2a0b6" opacity="0.85"/><circle cx="378.9" cy="287.6" r="1.0" fill="#ffffff" opacity="0.85"/><circle cx="399.4" cy="262.4" r="0.8" fill="#d85c86" opacity="0.85"/><circle cx="388.6" cy="263.2" r="1.4" fill="#f0f0f4" opacity="0.85"/><circle cx="397.6" cy="203.2" r="0.8" fill="#e9b34f" opacity="0.85"/><circle cx="413.0" cy="211.4" r="0.9" fill="#7fb7c4" opacity="0.85"/><circle cx="387.1" cy="250.6" r="1.2" fill="#7fb7c4" opacity="0.85"/><circle cx="405.2" cy="295.4" r="1.2" fill="#e9b34f" opacity="0.85"/><circle cx="413.2" cy="290.0" r="0.7" fill="#7fb7c4" opacity="0.85"/><circle cx="378.9" cy="249.6" r="1.7" fill="#e9b34f" opacity="0.85"/><circle cx="390.7" cy="288.2" r="1.6" fill="#f4e9ec" opacity="0.85"/><circle cx="398.1" cy="215.3" r="1.2" fill="#c2285c" opacity="0.85"/><circle cx="381.0" cy="279.1" r="1.2" fill="#f4e9ec" opacity="0.85"/><circle cx="402.7" cy="223.8" r="1.6" fill="#7fb7c4" opacity="0.85"/><circle cx="391.0" cy="217.0" r="1.6" fill="#7fb7c4" opacity="0.85"/><circle cx="391.4" cy="270.4" r="1.1" fill="#f2a0b6" opacity="0.85"/><circle cx="388.0" cy="281.0" r="0.7" fill="#c2285c" opacity="0.85"/><circle cx="407.9" cy="213.3" r="1.6" fill="#ffffff" opacity="0.85"/><circle cx="410.3" cy="229.2" r="1.1" fill="#f2a0b6" opacity="0.85"/><circle cx="390.8" cy="283.8" r="0.8" fill="#f2a0b6" opacity="0.85"/><circle cx="404.7" cy="282.3" r="1.0" fill="#ffffff" opacity="0.85"/></g><path d="M389.4 188 L396.6 188 L397.4 200 L390 212 L386 201 Z" fill="#c9957b" /><path d="M387.6 177.6 C387.2 172.8 398 172.2 398.6 178.4 C399 184.4 396.8 190.4 393.2 190.4 C389.8 190.4 387.6 183.6 387.6 177.6 Z" fill="#d6a288" /><path d="M390 178.4 L392.4 178 M394.6 177.6 L397 177.2" fill="none"  stroke="#3a2520" stroke-width="0.7"/><path d="M392.6 185.6 L395.6 185.2 L394.2 186.6 Z" fill="#9a4a48" /><path d="M392 170.4 C386 169.6 381.6 174 381.4 180 C378.6 184 377.6 190 378.6 195 C376.6 200 378 208 380.6 212.6 C382.6 215 385.6 214.6 386.6 212 C385 206 386.4 200 388.8 194.6 C387.4 188 387.2 181.6 388.6 177 C391 174.6 396 174.4 398.4 178 C399.6 184 399.8 190 398.4 195.4 C398 200 399.4 204.6 401.6 205.6 C404 203 404.6 198 403.6 194 C405.4 188 405 181 402.4 176 C400.4 172 396.4 170.6 392 170.4 Z" fill="#2a1c19" /><path d="M381.6 186 C379.6 192 381 198 380 204 C381.6 207 383 206 383.6 203 C382.6 197 384 191 385 187 Z" fill="#3d2a24" /></g><rect x="343.0" y="149.8" width="102.6" height="144.6" filter="url(#n343_149)" opacity="0.22" style="mix-blend-mode:overlay"/></svg></div>
<div class="ph" style="left:272.0px;top:248.2px;width:68.0px;height:95.6px;background:#888"><svg width="68.0" height="95.6" viewBox="272.0 248.2 68.0 95.6"><defs><filter id="b272_248" x="-5%" y="-5%" width="110%" height="110%"><feGaussianBlur stdDeviation="0.45"/></filter><filter id="n272_248" x="0" y="0" width="100%" height="100%"><feTurbulence type="fractalNoise" baseFrequency="0.9" numOctaves="2" seed="520"/><feColorMatrix type="matrix" values="0 0 0 0 0.5  0 0 0 0 0.5  0 0 0 0 0.5  1.6 0 0 0 -0.55"/><feGaussianBlur stdDeviation="0.35"/></filter></defs><g filter="url(#b272_248)"><defs><linearGradient id="p3sky" x1="0" y1="0" x2="0" y2="1"><stop offset="0" stop-color="#d4e2ea"/><stop offset="1" stop-color="#c3d0d8"/></linearGradient></defs><rect x="271.0" y="247.0" width="70.0" height="99.0" fill="url(#p3sky)" /><rect x="271.0" y="247.0" width="22.0" height="54.0" fill="#b7c4cc" /><rect x="281.6" y="252.0" width="2.4" height="31.0" fill="#5e6c74" /><rect x="271.0" y="278.0" width="4.0" height="22.0" fill="#4a555c" /><rect x="293.0" y="253.0" width="6.0" height="25.0" fill="#8d9aa0" /><rect x="297.0" y="261.0" width="14.0" height="17.0" fill="#909da2" /><rect x="298.0" y="264.0" width="12.0" height="1.2" fill="#6a777e" /><rect x="298.0" y="267.4" width="12.0" height="1.2" fill="#6a777e" /><rect x="298.0" y="270.8" width="12.0" height="1.2" fill="#6a777e" /><path d="M312 262 C316 252 330 253 337 258 C341 262 341 270 338 272 L312 274 Z" fill="#2b3d40" /><path d="M289 282 C292 272 304 269 312 273 C320 265 334 267 341 273 V300 H289 Z" fill="#cdd6dd" /><rect x="321.1" y="291.7" width="2.2" height="1.7" fill="#ffffff"  opacity="0.75"/><rect x="322.6" y="285.0" width="2.3" height="1.5" fill="#55636a"  opacity="0.75"/><rect x="322.4" y="296.8" width="1.0" height="1.2" fill="#55636a"  opacity="0.75"/><rect x="309.0" y="271.3" width="1.2" height="1.5" fill="#6d7b82"  opacity="0.75"/><rect x="304.0" y="297.3" width="2.2" height="0.8" fill="#8a979e"  opacity="0.75"/><rect x="293.6" y="287.8" width="1.6" height="0.8" fill="#8a979e"  opacity="0.75"/><rect x="290.3" y="292.8" width="2.5" height="0.8" fill="#55636a"  opacity="0.75"/><rect x="304.5" y="298.8" width="1.8" height="1.4" fill="#55636a"  opacity="0.75"/><rect x="299.1" y="299.0" width="1.2" height="1.8" fill="#6d7b82"  opacity="0.75"/><rect x="304.9" y="279.6" width="1.1" height="0.8" fill="#3a484e"  opacity="0.75"/><rect x="306.6" y="294.2" width="1.9" height="1.3" fill="#ffffff"  opacity="0.75"/><rect x="306.9" y="277.9" width="2.3" height="1.2" fill="#26343a"  opacity="0.75"/><rect x="299.2" y="283.1" width="1.1" height="0.9" fill="#3a484e"  opacity="0.75"/><rect x="337.5" y="279.4" width="1.5" height="1.3" fill="#6d7b82"  opacity="0.75"/><rect x="308.3" y="286.5" width="0.8" height="0.7" fill="#55636a"  opacity="0.75"/><rect x="321.2" y="298.5" width="1.0" height="0.9" fill="#8a979e"  opacity="0.75"/><rect x="337.1" y="279.0" width="1.4" height="1.2" fill="#8a979e"  opacity="0.75"/><rect x="313.1" y="286.9" width="2.2" height="1.0" fill="#26343a"  opacity="0.75"/><rect x="291.8" y="298.3" width="1.0" height="1.0" fill="#eef2f5"  opacity="0.75"/><rect x="308.1" y="272.7" width="1.3" height="1.4" fill="#3a484e"  opacity="0.75"/><rect x="305.6" y="278.1" width="1.1" height="0.7" fill="#55636a"  opacity="0.75"/><rect x="326.1" y="277.9" width="1.7" height="1.5" fill="#3a484e"  opacity="0.75"/><rect x="339.3" y="285.1" width="1.5" height="0.9" fill="#eef2f5"  opacity="0.75"/><rect x="307.2" y="276.0" width="2.0" height="0.8" fill="#ffffff"  opacity="0.75"/><rect x="291.6" y="283.8" width="2.3" height="0.8" fill="#ffffff"  opacity="0.75"/><rect x="318.2" y="272.2" width="2.4" height="1.1" fill="#55636a"  opacity="0.75"/><rect x="311.7" y="272.8" width="2.3" height="1.0" fill="#6d7b82"  opacity="0.75"/><rect x="336.1" y="287.9" width="1.1" height="1.2" fill="#6d7b82"  opacity="0.75"/><rect x="324.4" y="278.2" width="1.3" height="1.2" fill="#55636a"  opacity="0.75"/><rect x="295.6" y="294.3" width="1.8" height="0.8" fill="#6d7b82"  opacity="0.75"/><rect x="333.4" y="273.8" width="1.7" height="1.2" fill="#eef2f5"  opacity="0.75"/><rect x="333.4" y="279.6" width="2.2" height="1.5" fill="#ffffff"  opacity="0.75"/><rect x="319.4" y="269.1" width="1.4" height="1.3" fill="#ffffff"  opacity="0.75"/><rect x="304.0" y="283.5" width="2.2" height="1.4" fill="#26343a"  opacity="0.75"/><rect x="337.8" y="278.9" width="1.1" height="1.6" fill="#6d7b82"  opacity="0.75"/><rect x="317.3" y="276.0" width="2.0" height="1.2" fill="#8a979e"  opacity="0.75"/><rect x="315.0" y="289.6" width="1.4" height="0.9" fill="#26343a"  opacity="0.75"/><rect x="326.9" y="294.5" width="1.4" height="1.6" fill="#8a979e"  opacity="0.75"/><rect x="333.3" y="282.4" width="1.5" height="1.0" fill="#55636a"  opacity="0.75"/><rect x="316.5" y="273.3" width="2.3" height="1.7" fill="#6d7b82"  opacity="0.75"/><rect x="304.1" y="270.5" width="2.0" height="1.1" fill="#eef2f5"  opacity="0.75"/><rect x="329.0" y="286.6" width="2.0" height="1.1" fill="#eef2f5"  opacity="0.75"/><rect x="317.7" y="295.7" width="1.3" height="1.8" fill="#55636a"  opacity="0.75"/><rect x="298.0" y="282.1" width="2.0" height="0.9" fill="#ffffff"  opacity="0.75"/><rect x="299.0" y="291.0" width="2.6" height="1.8" fill="#55636a"  opacity="0.75"/><rect x="292.7" y="272.3" width="1.4" height="0.8" fill="#55636a"  opacity="0.75"/><rect x="317.4" y="281.3" width="1.4" height="1.4" fill="#3a484e"  opacity="0.75"/><rect x="319.5" y="275.6" width="2.4" height="0.6" fill="#6d7b82"  opacity="0.75"/><rect x="337.6" y="295.4" width="2.4" height="1.4" fill="#eef2f5"  opacity="0.75"/><rect x="308.7" y="269.2" width="1.9" height="0.7" fill="#eef2f5"  opacity="0.75"/><rect x="315.6" y="298.4" width="1.3" height="1.0" fill="#55636a"  opacity="0.75"/><rect x="311.0" y="294.0" width="2.0" height="1.0" fill="#55636a"  opacity="0.75"/><rect x="297.8" y="280.2" width="1.7" height="0.8" fill="#55636a"  opacity="0.75"/><rect x="320.4" y="279.2" width="2.4" height="0.6" fill="#3a484e"  opacity="0.75"/><rect x="306.3" y="297.3" width="1.8" height="1.0" fill="#eef2f5"  opacity="0.75"/><rect x="308.8" y="281.8" width="1.2" height="0.9" fill="#ffffff"  opacity="0.75"/><rect x="309.0" y="298.8" width="2.4" height="1.3" fill="#26343a"  opacity="0.75"/><rect x="327.1" y="277.6" width="1.3" height="0.6" fill="#26343a"  opacity="0.75"/><rect x="314.6" y="277.2" width="1.7" height="0.7" fill="#eef2f5"  opacity="0.75"/><rect x="338.0" y="275.9" width="0.9" height="0.8" fill="#6d7b82"  opacity="0.75"/><rect x="290.7" y="285.0" width="1.3" height="1.7" fill="#8a979e"  opacity="0.75"/><rect x="291.8" y="283.7" width="2.3" height="1.5" fill="#26343a"  opacity="0.75"/><rect x="304.7" y="287.5" width="1.7" height="1.4" fill="#eef2f5"  opacity="0.75"/><rect x="334.0" y="296.6" width="0.8" height="0.8" fill="#26343a"  opacity="0.75"/><rect x="316.7" y="278.8" width="1.3" height="1.2" fill="#6d7b82"  opacity="0.75"/><rect x="307.5" y="289.8" width="2.3" height="0.8" fill="#3a484e"  opacity="0.75"/><rect x="302.6" y="282.6" width="2.4" height="1.7" fill="#eef2f5"  opacity="0.75"/><rect x="299.6" y="281.7" width="2.3" height="1.3" fill="#ffffff"  opacity="0.75"/><rect x="325.4" y="288.2" width="1.7" height="1.7" fill="#6d7b82"  opacity="0.75"/><rect x="313.8" y="289.8" width="2.1" height="1.7" fill="#6d7b82"  opacity="0.75"/><rect x="331.5" y="270.1" width="2.3" height="1.4" fill="#6d7b82"  opacity="0.75"/><rect x="319.1" y="288.7" width="1.7" height="1.0" fill="#55636a"  opacity="0.75"/><rect x="313.9" y="285.6" width="1.7" height="1.0" fill="#55636a"  opacity="0.75"/><rect x="311.3" y="285.3" width="0.9" height="1.5" fill="#26343a"  opacity="0.75"/><rect x="331.0" y="293.3" width="2.0" height="0.6" fill="#ffffff"  opacity="0.75"/><rect x="311.5" y="270.2" width="1.5" height="1.2" fill="#3a484e"  opacity="0.75"/><rect x="332.1" y="275.0" width="2.0" height="1.7" fill="#ffffff"  opacity="0.75"/><rect x="334.7" y="299.8" width="2.1" height="1.1" fill="#55636a"  opacity="0.75"/><rect x="320.5" y="281.2" width="1.1" height="1.3" fill="#3a484e"  opacity="0.75"/><rect x="317.8" y="289.1" width="2.1" height="0.9" fill="#eef2f5"  opacity="0.75"/><rect x="318.8" y="291.8" width="2.4" height="0.8" fill="#6d7b82"  opacity="0.75"/><rect x="294.6" y="289.9" width="1.7" height="1.0" fill="#ffffff"  opacity="0.75"/><rect x="308.7" y="269.8" width="2.1" height="0.8" fill="#ffffff"  opacity="0.75"/><rect x="323.9" y="277.3" width="2.5" height="1.3" fill="#55636a"  opacity="0.75"/><rect x="303.2" y="285.7" width="1.3" height="1.5" fill="#eef2f5"  opacity="0.75"/><rect x="338.8" y="293.9" width="2.4" height="1.1" fill="#6d7b82"  opacity="0.75"/><rect x="299.0" y="290.8" width="2.0" height="0.7" fill="#ffffff"  opacity="0.75"/><rect x="291.8" y="295.6" width="1.7" height="1.1" fill="#6d7b82"  opacity="0.75"/><rect x="333.8" y="283.4" width="1.4" height="1.6" fill="#3a484e"  opacity="0.75"/><rect x="317.1" y="280.3" width="2.3" height="1.7" fill="#6d7b82"  opacity="0.75"/><rect x="324.1" y="275.1" width="1.0" height="1.8" fill="#ffffff"  opacity="0.75"/><rect x="314.6" y="274.8" width="2.1" height="1.1" fill="#8a979e"  opacity="0.75"/><rect x="301.8" y="278.7" width="1.9" height="1.0" fill="#6d7b82"  opacity="0.75"/><rect x="308.9" y="291.1" width="1.4" height="1.0" fill="#ffffff"  opacity="0.75"/><rect x="311.7" y="295.3" width="1.7" height="1.3" fill="#eef2f5"  opacity="0.75"/><rect x="300.7" y="273.8" width="0.9" height="0.6" fill="#55636a"  opacity="0.75"/><rect x="300.1" y="269.3" width="2.4" height="1.2" fill="#8a979e"  opacity="0.75"/><rect x="307.4" y="281.7" width="1.3" height="1.7" fill="#6d7b82"  opacity="0.75"/><rect x="306.2" y="282.8" width="1.1" height="1.4" fill="#3a484e"  opacity="0.75"/><rect x="308.7" y="280.3" width="2.4" height="0.8" fill="#26343a"  opacity="0.75"/><rect x="295.5" y="294.2" width="2.2" height="1.4" fill="#3a484e"  opacity="0.75"/><rect x="314.1" y="269.0" width="2.5" height="1.0" fill="#3a484e"  opacity="0.75"/><rect x="324.4" y="289.6" width="1.6" height="1.7" fill="#3a484e"  opacity="0.75"/><rect x="329.3" y="278.4" width="1.6" height="0.9" fill="#55636a"  opacity="0.75"/><rect x="291.7" y="290.9" width="1.8" height="1.4" fill="#eef2f5"  opacity="0.75"/><rect x="310.1" y="299.2" width="1.5" height="1.0" fill="#6d7b82"  opacity="0.75"/><rect x="308.1" y="270.1" width="2.6" height="1.2" fill="#8a979e"  opacity="0.75"/><rect x="302.0" y="289.5" width="2.5" height="1.4" fill="#6d7b82"  opacity="0.75"/><rect x="326.3" y="276.7" width="1.6" height="1.1" fill="#ffffff"  opacity="0.75"/><rect x="310.5" y="269.4" width="1.8" height="1.8" fill="#eef2f5"  opacity="0.75"/><rect x="318.3" y="298.1" width="2.1" height="0.9" fill="#8a979e"  opacity="0.75"/><rect x="314.6" y="297.9" width="0.9" height="0.9" fill="#3a484e"  opacity="0.75"/><rect x="314.9" y="293.0" width="0.9" height="1.6" fill="#6d7b82"  opacity="0.75"/><rect x="305.3" y="269.6" width="0.9" height="1.8" fill="#55636a"  opacity="0.75"/><rect x="324.8" y="288.5" width="1.1" height="0.9" fill="#26343a"  opacity="0.75"/><rect x="329.5" y="270.8" width="2.6" height="0.8" fill="#3a484e"  opacity="0.75"/><rect x="332.8" y="274.9" width="0.8" height="1.2" fill="#6d7b82"  opacity="0.75"/><rect x="311.2" y="292.6" width="1.7" height="0.8" fill="#3a484e"  opacity="0.75"/><rect x="335.6" y="277.8" width="1.6" height="1.6" fill="#55636a"  opacity="0.75"/><rect x="317.7" y="272.4" width="1.7" height="1.5" fill="#26343a"  opacity="0.75"/><rect x="334.1" y="259.6" width="1.0" height="0.7" fill="#4b5d62"  opacity="0.7"/><rect x="330.8" y="268.4" width="2.0" height="1.3" fill="#1c2b2e"  opacity="0.7"/><rect x="313.7" y="266.6" width="0.9" height="0.8" fill="#1c2b2e"  opacity="0.7"/><rect x="335.8" y="269.9" width="0.9" height="1.4" fill="#1c2b2e"  opacity="0.7"/><rect x="332.3" y="264.0" width="1.9" height="1.3" fill="#4b5d62"  opacity="0.7"/><rect x="327.5" y="262.0" width="1.8" height="1.3" fill="#4b5d62"  opacity="0.7"/><rect x="331.7" y="266.6" width="1.1" height="1.4" fill="#1c2b2e"  opacity="0.7"/><rect x="327.2" y="259.8" width="1.2" height="0.7" fill="#1c2b2e"  opacity="0.7"/><rect x="330.2" y="259.1" width="0.9" height="1.4" fill="#6a7c82"  opacity="0.7"/><rect x="312.8" y="256.2" width="2.0" height="1.4" fill="#1c2b2e"  opacity="0.7"/><rect x="335.2" y="271.1" width="1.5" height="0.8" fill="#1c2b2e"  opacity="0.7"/><rect x="315.4" y="257.6" width="1.2" height="0.8" fill="#6a7c82"  opacity="0.7"/><rect x="334.3" y="267.1" width="0.9" height="1.1" fill="#4b5d62"  opacity="0.7"/><rect x="329.0" y="256.6" width="1.7" height="1.0" fill="#1c2b2e"  opacity="0.7"/><rect x="315.2" y="259.7" width="1.9" height="1.1" fill="#1c2b2e"  opacity="0.7"/><rect x="316.6" y="254.9" width="1.6" height="0.8" fill="#1c2b2e"  opacity="0.7"/><rect x="338.2" y="264.7" width="0.9" height="1.4" fill="#1c2b2e"  opacity="0.7"/><rect x="330.5" y="257.7" width="0.8" height="1.5" fill="#4b5d62"  opacity="0.7"/><rect x="325.0" y="269.9" width="1.3" height="0.8" fill="#1c2b2e"  opacity="0.7"/><rect x="334.2" y="259.5" width="1.4" height="1.4" fill="#4b5d62"  opacity="0.7"/><rect x="321.9" y="268.6" width="1.8" height="1.3" fill="#4b5d62"  opacity="0.7"/><rect x="328.7" y="261.2" width="1.0" height="1.4" fill="#1c2b2e"  opacity="0.7"/><rect x="322.3" y="255.7" width="1.3" height="1.4" fill="#1c2b2e"  opacity="0.7"/><rect x="336.3" y="257.6" width="1.8" height="0.9" fill="#6a7c82"  opacity="0.7"/><rect x="324.7" y="263.6" width="0.9" height="0.8" fill="#6a7c82"  opacity="0.7"/><rect x="312.3" y="263.2" width="1.5" height="0.8" fill="#1c2b2e"  opacity="0.7"/><rect x="312.6" y="266.2" width="1.5" height="1.1" fill="#6a7c82"  opacity="0.7"/><rect x="324.9" y="266.7" width="1.3" height="1.6" fill="#6a7c82"  opacity="0.7"/><rect x="336.9" y="266.5" width="1.6" height="1.1" fill="#1c2b2e"  opacity="0.7"/><rect x="321.8" y="264.7" width="1.6" height="1.1" fill="#1c2b2e"  opacity="0.7"/><rect x="308.4" y="275.0" width="1.6" height="27.0" fill="#2a3338" /><rect x="294.0" y="284.0" width="1.2" height="17.0" fill="#39444a" /><rect x="322.0" y="280.0" width="1.0" height="20.0" fill="#39444a" /><path d="M316 292 C316 289 321 289 321 292 L321.6 302 H315.6 Z" fill="#1f2930" /><path d="M329 290 C329 287 333 287 333.6 290 L334 302 H328.6 Z" fill="#1f2930" /><path d="M334.6 289 C335 286.6 338.6 286.6 339 289.6 L339.4 301 H334.4 Z" fill="#26323a" /><rect x="271.0" y="296.0" width="41.0" height="5.0" fill="#9ba7ae" /><path d="M271 300 H341 V328 L271 304 Z" fill="#7c868c" /><path d="M300 302 H341 V322 Z" fill="#707a82" /><path d="M309 309 C316 303 330 301 341 302 V312 C330 313 318 313 309 311 Z" fill="#1e3244" /><path d="M322 305 C328 303 336 303 341 304 V307 C334 307 328 307 322 308 Z" fill="#6a8aa0" /><path d="M271 302 L289 303 L341 326 V346 H271 Z" fill="#e6eaee" /><path d="M271 308.4 L341 310.0 V311.8 L271 309.6 Z" fill="#8d979d" /><path d="M271 312.6 L341 314.20000000000005 V316.4 L271 314.2 Z" fill="#8d979d" /><path d="M271 318.2 L341 319.8 V322.59999999999997 L271 320.4 Z" fill="#8d979d" /><path d="M271 325.6 L341 327.20000000000005 V330.8 L271 328.6 Z" fill="#8d979d" /><path d="M271 335.6 L341 337.20000000000005 V341.59999999999997 L271 339.4 Z" fill="#8d979d" /><path d="M289 303 L341 326 V322 L300 302 Z" fill="#7c868c" /></g><rect x="272.0" y="248.2" width="68.0" height="95.6" filter="url(#n272_248)" opacity="0.22" style="mix-blend-mode:overlay"/></svg></div>
<div class="ph" style="left:272.2px;top:347.0px;width:67.8px;height:94.2px;background:#888"><svg width="67.8" height="94.2" viewBox="272.2 347.0 67.8 94.2"><defs><filter id="b272_347" x="-5%" y="-5%" width="110%" height="110%"><feGaussianBlur stdDeviation="0.6"/></filter><filter id="n272_347" x="0" y="0" width="100%" height="100%"><feTurbulence type="fractalNoise" baseFrequency="0.9" numOctaves="2" seed="619"/><feColorMatrix type="matrix" values="0 0 0 0 0.5  0 0 0 0 0.5  0 0 0 0 0.5  1.6 0 0 0 -0.55"/><feGaussianBlur stdDeviation="0.35"/></filter></defs><g filter="url(#b272_347)"><defs><radialGradient id="p4sky" cx="0.55" cy="0.48" r="0.62"><stop offset="0" stop-color="#f0d3b0"/><stop offset="0.25" stop-color="#c79d76"/><stop offset="0.6" stop-color="#6d5c4e"/><stop offset="1" stop-color="#333235"/></radialGradient><linearGradient id="p4road" x1="0" y1="0" x2="0" y2="1"><stop offset="0" stop-color="#6e5a46"/><stop offset="0.5" stop-color="#4f4236"/><stop offset="1" stop-color="#2e2822"/></linearGradient><radialGradient id="p4v" cx="0.5" cy="0.5" r="0.72"><stop offset="0.55" stop-color="#00000000"/><stop offset="1" stop-color="#000000a0"/></radialGradient></defs><rect x="271.0" y="346.0" width="70.0" height="97.0" fill="url(#p4sky)" /><path d="M341 346 H333 L331 358 L322 372 L316 384 L312 396 L311 406 H341 Z" fill="#6f5b46" /><path d="M341 352 L334 360 L326 376 L321 388 L320 404 H341 Z" fill="#94795a" /><path d="M341 372 L332 384 L330 406 H341 Z" fill="#4a3d30" /><path d="M341 346 H336 L334 356 L341 350 Z" fill="#a4624a" /><path d="M271 382 L290 386 L302 396 L304 408 H271 Z" fill="#5a3d30" /><path d="M271 346 H291 C294 352 291 358 294 364 C300 368 300 376 303 384 C306 392 304 400 304 408 H271 Z" fill="#1d1815" /><path d="M276 384 C284 380 292 384 294 392 L292 404 H276 Z" fill="#3a2a22" /><ellipse cx="309.6" cy="400" rx="2.6" ry="5" fill="#2a241e"/><path d="M307 404 L312 404 L341 424 V443 H271 V430 Z" fill="url(#p4road)" /><path d="M308.6 404 L311 404 L322 443 H296 Z" fill="#7d6853"  opacity="0.7"/><path d="M279 412 C282 407 292 406 297 409 L298 415 C292 419 282 419 278 417 Z" fill="#6f6a66" /><path d="M296 405 C298 402.6 303 402.6 304 405 L304 409 H296 Z" fill="#4c4540" /><path d="M313 404 C316 402 322 403 326 406 L328 412 H316 Z" fill="#3a332d" /><path d="M326 408 C330 406 338 408 341 411 V420 L328 416 Z" fill="#2d2823" /><path d="M271 416 L279 412 L279 420 L271 426 Z" fill="#28221e" /><path d="M288 420.6 L289.4 421 L273.6 437 L272.4 436.4 Z" fill="#a99a88" /><rect x="271.0" y="346.0" width="70.0" height="97.0" fill="url(#p4v)" /></g><rect x="272.2" y="347.0" width="67.8" height="94.2" filter="url(#n272_347)" opacity="0.22" style="mix-blend-mode:overlay"/></svg></div>
<div class="ph" style="left:343.0px;top:297.6px;width:102.6px;height:143.8px;background:#888"><svg width="102.6" height="143.8" viewBox="343.0 297.6 102.6 143.8"><defs><filter id="b343_297" x="-5%" y="-5%" width="110%" height="110%"><feGaussianBlur stdDeviation="0.45"/></filter><filter id="n343_297" x="0" y="0" width="100%" height="100%"><feTurbulence type="fractalNoise" baseFrequency="0.9" numOctaves="2" seed="640"/><feColorMatrix type="matrix" values="0 0 0 0 0.5  0 0 0 0 0.5  0 0 0 0 0.5  1.6 0 0 0 -0.55"/><feGaussianBlur stdDeviation="0.35"/></filter></defs><g filter="url(#b343_297)"><defs><linearGradient id="p5st" x1="0" y1="0" x2="1" y2="0"><stop offset="0" stop-color="#b2a48c"/><stop offset="0.6" stop-color="#a59478"/><stop offset="1" stop-color="#8e7f68"/></linearGradient><linearGradient id="p5gr" x1="0" y1="0" x2="0" y2="1"><stop offset="0" stop-color="#c2b8a8"/><stop offset="1" stop-color="#a9a196"/></linearGradient></defs><rect x="342.0" y="296.0" width="105.0" height="147.0" fill="#e8e8eb" /><path d="M342 296 H374 L386 304 L392 314 V396 H342 Z" fill="#cfc5b2" /><path d="M342 296 H374 L386 304 L390 310 L342 301 Z" fill="#8a857b" /><path d="M390 312 L396 308 L404 314 L415 318 V396 H390 Z" fill="#dbd3c6" /><rect x="396.0" y="304.0" width="2.4" height="8.0" fill="#c4b9a8" /><path d="M342 308.6 L392 317.6 V320.20000000000005 L342 311.20000000000005 Z" fill="#34363c" /><path d="M342 311.20000000000005 L392 320.20000000000005 V321.6 L342 312.40000000000003 Z" fill="#8d8676" /><path d="M342 325.6 L392 332 V335 L342 328.6 Z" fill="#34363c" /><path d="M342 328.6 L392 335 V336.4 L342 329.8 Z" fill="#8d8676" /><path d="M342 344.4 L392 354.6 V358.20000000000005 L342 348.0 Z" fill="#34363c" /><path d="M342 348.0 L392 358.20000000000005 V359.6 L342 349.2 Z" fill="#8d8676" /><rect x="349.0" y="301.0" width="3.0" height="7.0" fill="#5a544c" /><rect x="359.0" y="303.0" width="3.0" height="7.0" fill="#5a544c" /><rect x="369.0" y="305.0" width="3.0" height="7.0" fill="#5a544c" /><rect x="350.0" y="314.0" width="3.0" height="7.0" fill="#5a544c" /><rect x="360.0" y="316.0" width="3.0" height="7.0" fill="#5a544c" /><rect x="371.0" y="318.0" width="3.0" height="7.0" fill="#5a544c" /><rect x="382.0" y="320.0" width="3.0" height="7.0" fill="#5a544c" /><rect x="350.0" y="332.0" width="3.0" height="7.0" fill="#5a544c" /><rect x="361.0" y="333.4" width="3.0" height="7.0" fill="#5a544c" /><rect x="372.0" y="335.0" width="3.0" height="7.0" fill="#5a544c" /><rect x="383.0" y="336.6" width="3.0" height="7.0" fill="#5a544c" /><rect x="349.0" y="353.0" width="3.0" height="7.0" fill="#5a544c" /><rect x="360.0" y="355.0" width="3.0" height="7.0" fill="#5a544c" /><rect x="372.0" y="357.4" width="3.0" height="7.0" fill="#5a544c" /><rect x="383.0" y="359.6" width="3.0" height="7.0" fill="#5a544c" /><rect x="396.0" y="322.0" width="2.4" height="6.0" fill="#8a8378" /><rect x="396.0" y="336.0" width="2.4" height="6.0" fill="#8a8378" /><rect x="396.0" y="350.0" width="2.4" height="6.0" fill="#8a8378" /><rect x="396.0" y="364.0" width="2.4" height="6.0" fill="#8a8378" /><rect x="402.0" y="322.0" width="2.4" height="6.0" fill="#8a8378" /><rect x="402.0" y="336.0" width="2.4" height="6.0" fill="#8a8378" /><rect x="402.0" y="350.0" width="2.4" height="6.0" fill="#8a8378" /><rect x="402.0" y="364.0" width="2.4" height="6.0" fill="#8a8378" /><rect x="408.0" y="322.0" width="2.4" height="6.0" fill="#8a8378" /><rect x="408.0" y="336.0" width="2.4" height="6.0" fill="#8a8378" /><rect x="408.0" y="350.0" width="2.4" height="6.0" fill="#8a8378" /><rect x="408.0" y="364.0" width="2.4" height="6.0" fill="#8a8378" /><path d="M342 366 L390 372 V378 L342 374 Z" fill="#2e2a28" /><rect x="342.0" y="374.0" width="48.0" height="23.0" fill="#3d2c22" /><rect x="346.0" y="379.0" width="10.0" height="15.0" fill="#7a5a3a" /><rect x="360.0" y="380.0" width="12.0" height="14.0" fill="#5a4230" /><rect x="376.0" y="381.0" width="12.0" height="14.0" fill="#241c18" /><rect x="390.0" y="376.0" width="22.0" height="21.0" fill="#8a7e6e" /><rect x="396.0" y="382.0" width="6.0" height="14.0" fill="#4a4036" /><rect x="348.0" y="390.0" width="42.0" height="8.0" fill="#3a3634"  opacity="0.8"/><path d="M414 312 C411 304 416 298 422 296 H447 V424 L414 414 Z" fill="url(#p5st)" /><path d="M411 318 C408 310 414 300 424 296 H447 V300 C430 300 420 306 418 320 Z" fill="#7f715c" /><path d="M418 320 C424 318 436 318 447 320 V323 C436 321 426 321 418 323.4 Z" fill="#7d6f5a" /><rect x="420.0" y="332.0" width="27.0" height="0.8" fill="#8b7c66" /><rect x="420.0" y="342.0" width="27.0" height="0.8" fill="#8b7c66" /><rect x="420.0" y="352.0" width="27.0" height="0.8" fill="#8b7c66" /><rect x="420.0" y="362.0" width="27.0" height="0.8" fill="#8b7c66" /><rect x="420.0" y="372.0" width="27.0" height="0.8" fill="#8b7c66" /><rect x="420.0" y="384.0" width="27.0" height="0.8" fill="#8b7c66" /><rect x="420.0" y="396.0" width="27.0" height="0.8" fill="#8b7c66" /><path d="M417 356 L422 355 V404 L417 402 Z" fill="#4e463c" /><rect x="440.0" y="372.0" width="3.0" height="20.0" fill="#5a5044" /><path d="M399.6 334 L404.6 332.4 L414 347 L409.6 351.6 L401 349 Z" fill="#3e4d7a" /><path d="M399.6 334 L400.4 334 L392.8 368 L392 368 Z" fill="#777" /><path d="M394.6 351.4 L400 350 L400.8 362 L397 367 L392.6 364 Z" fill="#c9252c" /><path d="M342 396 H414 L447 420 V443 H342 Z" fill="url(#p5gr)" /><path d="M342 404 L372 400 L400 404 L380 412 L342 416 Z" fill="#d6cdbd" /><path d="M396 414 L447 424 V443 H372 Z" fill="#6f6a68" /><path d="M342 430 L380 420 L400 426 L360 443 H342 Z" fill="#8f8a84" /><path d="M402 414 L430 420 L447 432 V436 L420 424 Z" fill="#a69e94" /><path d="M350 424 L366 420 L372 422 L354 427 Z" fill="#e0d9cc" /><path d="M344 434 L372 426 L380 428 L350 438 Z" fill="#d8d2c6" /><path d="M390 436 L430 440 L428 443 H384 Z" fill="#c9c4ba" /><rect x="381.4" y="398.0" width="1.2" height="16.0" fill="#2c2c30" /><rect x="385.2" y="397.0" width="1.2" height="15.0" fill="#2c2c30" /><rect x="389.2" y="396.0" width="1.2" height="15.0" fill="#2c2c30" /><rect x="402.2" y="402.0" width="1.2" height="24.0" fill="#2c2c30" /><rect x="418.2" y="406.0" width="1.2" height="32.0" fill="#2c2c30" /><rect x="426.4" y="378.0" width="1.4" height="48.0" fill="#2a2a2e" /><rect x="423.6" y="378.0" width="3.4" height="8.0" fill="#26262a" /><rect x="428.0" y="398.0" width="2.0" height="8.0" fill="#2c2c30" /><rect x="417.6" y="404.0" width="2.8" height="8.0" fill="#3a3a3e" /><circle cx="412.2" cy="380.4" r="2.5" fill="#c9363c"/><rect x="410.6" y="379.9" width="3.2" height="1.0" fill="#f0e8e8" /><rect x="411.9" y="382.6" width="0.6" height="15.4" fill="#555" /><path d="M346.6 397 L349.4 397 L350 404 L352 412 L350.6 412.6 L348.4 406 L345.6 412 L344.4 411.4 L346.4 404 Z" fill="#2a2c34" /></g><rect x="343.0" y="297.6" width="102.6" height="143.8" filter="url(#n343_297)" opacity="0.22" style="mix-blend-mode:overlay"/></svg></div>
<div class="ph" style="left:603.8px;top:99.2px;width:92.0px;height:128.4px;background:#888"><svg width="92.0" height="128.4" viewBox="603.8 99.2 92.0 128.4"><defs><filter id="b603_99" x="-5%" y="-5%" width="110%" height="110%"><feGaussianBlur stdDeviation="0.45"/></filter><filter id="n603_99" x="0" y="0" width="100%" height="100%"><feTurbulence type="fractalNoise" baseFrequency="0.9" numOctaves="2" seed="703"/><feColorMatrix type="matrix" values="0 0 0 0 0.5  0 0 0 0 0.5  0 0 0 0 0.5  1.6 0 0 0 -0.55"/><feGaussianBlur stdDeviation="0.35"/></filter></defs><g filter="url(#b603_99)"><defs><linearGradient id="p6sky" x1="0" y1="0" x2="0.6" y2="1"><stop offset="0" stop-color="#4696cc"/><stop offset="0.5" stop-color="#7db8dc"/><stop offset="1" stop-color="#b5d3e2"/></linearGradient><linearGradient id="p6rd" x1="0" y1="0" x2="0" y2="1"><stop offset="0" stop-color="#5a6164"/><stop offset="1" stop-color="#43494c"/></linearGradient></defs><rect x="603.0" y="98.0" width="94.0" height="131.0" fill="url(#p6sky)" /><ellipse cx="662" cy="118" rx="22" ry="9" fill="#b9d6e6" opacity="0.7"/><path d="M661.6 124 C662 119 666 117 669 117.6 L674.8 120 V152 H661.6 Z" fill="#3f7f88" /><rect x="663.4" y="126.0" width="10.0" height="26.0" fill="#2f6d78" /><path d="M679.6 112 L684 109 L697 108 V186 H679.6 Z" fill="#3b6a6e" /><rect x="682.0" y="112.0" width="15.0" height="74.0" fill="#4a8084"  opacity="0.6"/><rect x="680.0" y="114.0" width="17.0" height="1.0" fill="#2d585c"  opacity="0.7"/><rect x="680.0" y="120.0" width="17.0" height="1.0" fill="#2d585c"  opacity="0.7"/><rect x="680.0" y="126.0" width="17.0" height="1.0" fill="#2d585c"  opacity="0.7"/><rect x="680.0" y="132.0" width="17.0" height="1.0" fill="#2d585c"  opacity="0.7"/><rect x="680.0" y="138.0" width="17.0" height="1.0" fill="#2d585c"  opacity="0.7"/><rect x="680.0" y="144.0" width="17.0" height="1.0" fill="#2d585c"  opacity="0.7"/><rect x="680.0" y="150.0" width="17.0" height="1.0" fill="#2d585c"  opacity="0.7"/><rect x="680.0" y="156.0" width="17.0" height="1.0" fill="#2d585c"  opacity="0.7"/><rect x="680.0" y="162.0" width="17.0" height="1.0" fill="#2d585c"  opacity="0.7"/><rect x="680.0" y="168.0" width="17.0" height="1.0" fill="#2d585c"  opacity="0.7"/><rect x="680.0" y="174.0" width="17.0" height="1.0" fill="#2d585c"  opacity="0.7"/><path d="M613.6 112 L625 111 L647 119 L652 121 V178 H613.6 Z" fill="#d9dde0" /><path d="M646 119 L652.6 121 V152 L646 150 Z" fill="#5c676c" /><path d="M618 118 L646 126 V168 L618 166 Z" fill="#c9ced2" /><path d="M618 124 L646 129 V130 L618 125 Z" fill="#aab2b8" /><path d="M618 130 L646 135 V136 L618 131 Z" fill="#aab2b8" /><path d="M618 136 L646 141 V142 L618 137 Z" fill="#aab2b8" /><path d="M618 142 L646 147 V148 L618 143 Z" fill="#aab2b8" /><path d="M618 148 L646 153 V154 L618 149 Z" fill="#aab2b8" /><path d="M618 154 L646 159 V160 L618 155 Z" fill="#aab2b8" /><path d="M618 160 L646 165 V166 L618 161 Z" fill="#aab2b8" /><path d="M604 128 L626 134 V172 H604 Z" fill="#a5a9ad" /><path d="M606 132 L625 137 V148 L606 146 Z" fill="#7a4f52" /><path d="M604 150 L626 152 V170 H604 Z" fill="#8d9296" /><path d="M652 150 L672 146 L690 150 V178 H652 Z" fill="#b9c3c8" /><path d="M672 138 L690 142 V160 L672 158 Z" fill="#d5dde2" /><path d="M604 168 L660 172 L697 176 V182 L604 180 Z" fill="#7e8588" /><rect x="604.0" y="178.0" width="46.0" height="12.0" fill="#3c4346" /><rect x="612.0" y="172.0" width="1.0" height="18.0" fill="#c24a6a" /><rect x="616.0" y="174.0" width="1.6" height="14.0" fill="#d45a78" /><rect x="661.0" y="150.0" width="11.0" height="13.0" fill="#e4e4e6" /><circle cx="666.6" cy="156.6" r="4" fill="none" stroke="#c9494c" stroke-width="1.2"/><rect x="665.6" y="142.0" width="7.0" height="10.0" fill="#2f6fc4" /><rect x="672.0" y="148.0" width="18.6" height="15.4" fill="#2f72cc" /><path d="M676 158 V153 L674.6 153 L677 150.4 L679.4 153 L678 153 V158 Z" fill="#e8f0f8" /><path d="M681 161 V152 L679.4 152 L682 149.4 L684.6 152 L683 152 V161 Z" fill="#e8f0f8" /><path d="M686 158 V153 L684.8 153 L687.2 150.4 L689.4 153 L688.2 153 V158 Z" fill="#e8f0f8" /><rect x="682.6" y="165.0" width="7.4" height="6.0" fill="#c8a858" /><rect x="664.0" y="166.0" width="9.0" height="6.0" fill="#3a3d40" /><path d="M604 184 L650 180 L676 182 L697 190 V229 H604 Z" fill="url(#p6rd)" /><path d="M662 184 L676 183 L697 200 V229 H640 C648 214 656 196 662 184 Z" fill="#8a8c8a" /><path d="M676 183 L697 196 V229 H680 C682 214 680 196 676 183 Z" fill="#5d6364" /><path d="M604 188 L632 184 L636 186 L604 198 Z" fill="#7f8587" /><path d="M611 205 L640 192.6 L641 193.6 L612 206.4 Z" fill="#c6ccd0" /><path d="M606 216 L620 211 L622 213 L630 212 L626 219 L612 225 L606 226 L606 222 L616 218 L614 216 L606 219 Z" fill="#b5bcc0" /><path d="M645 178 C646 174 654 174 655 178 L656 190 H644.6 Z" fill="#d9dcdf" /><rect x="646.0" y="176.0" width="8.4" height="5.0" fill="#6b767c" /><rect x="645.0" y="188.0" width="11.0" height="3.0" fill="#2e3336" /><path d="M654 176 C655 173 660 173 661 176 V184 H654 Z" fill="#c7cbce" /><rect x="670.0" y="180.0" width="5.0" height="6.0" fill="#b0b6ba" /><rect x="664.4" y="160.0" width="1.0" height="44.0" fill="#4a5052" /><rect x="680.6" y="163.0" width="1.0" height="51.0" fill="#3f4648" /><rect x="689.0" y="120.0" width="1.0" height="109.0" fill="#3a4c4c"  opacity="0.7"/><rect x="686.0" y="180.0" width="11.0" height="49.0" fill="#465557"  opacity="0.55"/><rect x="604.0" y="98.0" width="93.0" height="131.0" fill="#2a5a70"  opacity="0.10"/></g><rect x="603.8" y="99.2" width="92.0" height="128.4" filter="url(#n603_99)" opacity="0.22" style="mix-blend-mode:overlay"/></svg></div>
<div class="ph" style="left:603.8px;top:231.4px;width:92.0px;height:129.2px;background:#888"><svg width="92.0" height="129.2" viewBox="603.8 231.4 92.0 129.2"><defs><filter id="b603_231" x="-5%" y="-5%" width="110%" height="110%"><feGaussianBlur stdDeviation="0.45"/></filter><filter id="n603_231" x="0" y="0" width="100%" height="100%"><feTurbulence type="fractalNoise" baseFrequency="0.9" numOctaves="2" seed="835"/><feColorMatrix type="matrix" values="0 0 0 0 0.5  0 0 0 0 0.5  0 0 0 0 0.5  1.6 0 0 0 -0.55"/><feGaussianBlur stdDeviation="0.35"/></filter></defs><g filter="url(#b603_231)"><defs><linearGradient id="p7sky" x1="0" y1="0" x2="0" y2="1"><stop offset="0" stop-color="#bfe4ea"/><stop offset="1" stop-color="#cdebee"/></linearGradient><linearGradient id="p7b" x1="0" y1="0" x2="0" y2="1"><stop offset="0" stop-color="#f0ddd5"/><stop offset="1" stop-color="#e3cabf"/></linearGradient></defs><rect x="603.0" y="230.0" width="94.0" height="132.0" fill="url(#p7sky)" /><path d="M680 306 L686 300 L697 308 V362 H678 Z" fill="#efe0d4" /><path d="M686 300 L688 294 L690 300 Z" fill="#d9c4b8" /><rect x="690.0" y="328.0" width="3.0" height="18.0" fill="#a89888" /><path d="M604 302 L607 292 L610 302 L614 304 V362 H604 Z" fill="#e9d2c6" /><path d="M604 302 L607 294 L610 302 Z" fill="#6b8f88" /><path d="M615 286 C620 279 632 276 641 276 C656 276 672 279 681 286 L684 296 V362 H612 V296 Z" fill="url(#p7b)" /><path d="M615 285 C626 278 664 277 681 285.6 L683 291 C664 283 630 283 614 291 Z" fill="#e7c4bb" /><path d="M613 300 C630 290 668 290 684 302 L684 305 C668 295 630 295 613 304 Z" fill="#d9b9b0" /><path d="M622 300 C632 296 640 296 648 298 L648 312 L622 314 Z" fill="#e6cfc6" /><path d="M652 298 C662 298 670 300 676 304 L676 316 L652 312 Z" fill="#ead6cc" /><path d="M641 294 C646 294 650 296 652 300 C648 304 640 304 636 300 Z" fill="#d8b8ae" /><rect x="644.6" y="326.5" width="2.1" height="1.5" fill="#e0b4aa"  opacity="0.55"/><rect x="673.6" y="298.4" width="1.9" height="1.5" fill="#e0b4aa"  opacity="0.55"/><rect x="669.1" y="291.2" width="1.2" height="0.9" fill="#ffffff"  opacity="0.55"/><rect x="657.7" y="329.3" width="1.4" height="1.4" fill="#ffffff"  opacity="0.55"/><rect x="656.3" y="296.0" width="0.8" height="1.5" fill="#d9a79c"  opacity="0.55"/><rect x="614.6" y="350.8" width="1.6" height="1.9" fill="#c98f86"  opacity="0.55"/><rect x="643.7" y="348.0" width="1.5" height="1.7" fill="#f2e2da"  opacity="0.55"/><rect x="612.3" y="290.5" width="1.7" height="1.4" fill="#e0b4aa"  opacity="0.55"/><rect x="683.7" y="347.9" width="1.8" height="1.2" fill="#f6ece6"  opacity="0.55"/><rect x="648.9" y="286.3" width="1.6" height="1.0" fill="#d9a79c"  opacity="0.55"/><rect x="673.0" y="313.4" width="2.1" height="2.0" fill="#d9a79c"  opacity="0.55"/><rect x="627.4" y="354.5" width="0.9" height="1.3" fill="#ffffff"  opacity="0.55"/><rect x="640.6" y="289.6" width="1.7" height="1.9" fill="#c98f86"  opacity="0.55"/><rect x="636.3" y="307.7" width="0.8" height="1.4" fill="#d9a79c"  opacity="0.55"/><rect x="621.7" y="337.7" width="0.8" height="1.5" fill="#f2e2da"  opacity="0.55"/><rect x="624.8" y="326.5" width="1.4" height="1.1" fill="#ffffff"  opacity="0.55"/><rect x="667.4" y="315.9" width="1.3" height="1.4" fill="#f6ece6"  opacity="0.55"/><rect x="612.0" y="349.7" width="2.2" height="1.6" fill="#d9a79c"  opacity="0.55"/><rect x="627.2" y="314.0" width="2.0" height="1.7" fill="#d9a79c"  opacity="0.55"/><rect x="615.0" y="295.1" width="1.4" height="0.8" fill="#e0b4aa"  opacity="0.55"/><rect x="635.7" y="306.5" width="0.9" height="0.9" fill="#e0b4aa"  opacity="0.55"/><rect x="657.8" y="285.2" width="1.3" height="1.7" fill="#f6ece6"  opacity="0.55"/><rect x="681.1" y="320.8" width="1.6" height="2.0" fill="#f6ece6"  opacity="0.55"/><rect x="657.2" y="307.6" width="1.1" height="1.7" fill="#ffffff"  opacity="0.55"/><rect x="625.7" y="340.2" width="2.1" height="1.1" fill="#f2e2da"  opacity="0.55"/><rect x="675.5" y="329.9" width="1.4" height="0.9" fill="#d9a79c"  opacity="0.55"/><rect x="648.9" y="303.4" width="1.8" height="1.3" fill="#f2e2da"  opacity="0.55"/><rect x="671.3" y="329.3" width="1.2" height="1.0" fill="#ffffff"  opacity="0.55"/><rect x="682.4" y="293.6" width="1.5" height="1.7" fill="#e0b4aa"  opacity="0.55"/><rect x="656.2" y="305.3" width="2.1" height="1.1" fill="#d9a79c"  opacity="0.55"/><rect x="617.0" y="315.3" width="1.1" height="0.9" fill="#c98f86"  opacity="0.55"/><rect x="638.6" y="327.5" width="1.0" height="1.3" fill="#f2e2da"  opacity="0.55"/><rect x="682.6" y="333.9" width="1.8" height="1.6" fill="#f6ece6"  opacity="0.55"/><rect x="654.5" y="354.2" width="1.5" height="1.3" fill="#c98f86"  opacity="0.55"/><rect x="681.3" y="285.6" width="1.7" height="1.5" fill="#ffffff"  opacity="0.55"/><rect x="634.4" y="294.4" width="0.9" height="1.4" fill="#c98f86"  opacity="0.55"/><rect x="665.1" y="352.4" width="1.8" height="1.8" fill="#c98f86"  opacity="0.55"/><rect x="637.3" y="336.1" width="2.1" height="2.0" fill="#f2e2da"  opacity="0.55"/><rect x="680.0" y="286.3" width="1.5" height="0.8" fill="#ffffff"  opacity="0.55"/><rect x="639.5" y="328.3" width="1.7" height="0.9" fill="#ffffff"  opacity="0.55"/><rect x="620.3" y="303.5" width="1.4" height="1.3" fill="#ffffff"  opacity="0.55"/><rect x="662.0" y="318.8" width="1.4" height="1.6" fill="#e0b4aa"  opacity="0.55"/><rect x="666.0" y="286.3" width="1.6" height="1.5" fill="#f6ece6"  opacity="0.55"/><rect x="680.9" y="292.6" width="1.9" height="1.7" fill="#f2e2da"  opacity="0.55"/><rect x="630.4" y="284.9" width="1.2" height="1.7" fill="#f6ece6"  opacity="0.55"/><rect x="649.3" y="341.3" width="1.3" height="2.1" fill="#f2e2da"  opacity="0.55"/><rect x="676.2" y="308.8" width="1.7" height="1.1" fill="#f2e2da"  opacity="0.55"/><rect x="669.9" y="341.4" width="1.1" height="1.1" fill="#f6ece6"  opacity="0.55"/><rect x="654.0" y="308.1" width="1.0" height="1.5" fill="#d9a79c"  opacity="0.55"/><rect x="663.2" y="356.2" width="1.2" height="1.0" fill="#f2e2da"  opacity="0.55"/><rect x="645.9" y="354.4" width="2.0" height="1.3" fill="#e0b4aa"  opacity="0.55"/><rect x="647.6" y="308.0" width="2.0" height="2.2" fill="#f2e2da"  opacity="0.55"/><rect x="635.1" y="347.0" width="1.2" height="1.7" fill="#ffffff"  opacity="0.55"/><rect x="663.0" y="327.4" width="1.2" height="1.9" fill="#d9a79c"  opacity="0.55"/><rect x="658.2" y="314.8" width="1.1" height="1.9" fill="#c98f86"  opacity="0.55"/><rect x="629.1" y="294.7" width="0.9" height="1.7" fill="#f2e2da"  opacity="0.55"/><rect x="619.8" y="324.7" width="1.7" height="1.3" fill="#d9a79c"  opacity="0.55"/><rect x="661.3" y="299.1" width="1.5" height="1.1" fill="#d9a79c"  opacity="0.55"/><rect x="666.4" y="324.6" width="0.9" height="1.1" fill="#c98f86"  opacity="0.55"/><rect x="650.9" y="356.0" width="1.5" height="2.2" fill="#f6ece6"  opacity="0.55"/><rect x="640.3" y="344.2" width="2.1" height="0.9" fill="#ffffff"  opacity="0.55"/><rect x="639.9" y="318.2" width="1.1" height="2.0" fill="#d9a79c"  opacity="0.55"/><rect x="639.1" y="327.2" width="2.0" height="1.9" fill="#c98f86"  opacity="0.55"/><rect x="645.4" y="333.5" width="1.1" height="1.8" fill="#ffffff"  opacity="0.55"/><rect x="678.5" y="293.4" width="1.1" height="1.3" fill="#d9a79c"  opacity="0.55"/><rect x="682.4" y="324.8" width="1.9" height="1.2" fill="#ffffff"  opacity="0.55"/><rect x="673.6" y="310.5" width="0.9" height="1.4" fill="#e0b4aa"  opacity="0.55"/><rect x="642.3" y="304.9" width="2.1" height="1.1" fill="#d9a79c"  opacity="0.55"/><rect x="642.9" y="286.7" width="1.5" height="1.8" fill="#f6ece6"  opacity="0.55"/><rect x="645.9" y="360.0" width="2.1" height="1.5" fill="#ffffff"  opacity="0.55"/><rect x="661.6" y="355.9" width="1.5" height="2.1" fill="#d9a79c"  opacity="0.55"/><rect x="666.6" y="317.4" width="1.6" height="2.0" fill="#e0b4aa"  opacity="0.55"/><rect x="658.0" y="323.7" width="2.0" height="1.6" fill="#c98f86"  opacity="0.55"/><rect x="660.3" y="356.6" width="2.0" height="1.7" fill="#c98f86"  opacity="0.55"/><rect x="673.3" y="357.6" width="1.5" height="1.6" fill="#f6ece6"  opacity="0.55"/><rect x="641.6" y="292.7" width="0.8" height="1.3" fill="#e0b4aa"  opacity="0.55"/><rect x="681.8" y="323.2" width="1.4" height="1.9" fill="#e0b4aa"  opacity="0.55"/><rect x="620.8" y="291.1" width="1.0" height="2.1" fill="#f2e2da"  opacity="0.55"/><rect x="641.8" y="356.7" width="2.1" height="1.2" fill="#f2e2da"  opacity="0.55"/><rect x="647.5" y="309.8" width="2.1" height="2.1" fill="#f2e2da"  opacity="0.55"/><rect x="649.8" y="292.3" width="1.4" height="0.8" fill="#c98f86"  opacity="0.55"/><rect x="621.3" y="343.2" width="0.8" height="1.1" fill="#f6ece6"  opacity="0.55"/><rect x="612.9" y="305.6" width="1.8" height="1.1" fill="#f2e2da"  opacity="0.55"/><rect x="619.6" y="339.5" width="1.0" height="1.5" fill="#c98f86"  opacity="0.55"/><rect x="663.7" y="337.3" width="2.0" height="0.8" fill="#ffffff"  opacity="0.55"/><rect x="641.8" y="324.2" width="1.0" height="1.1" fill="#ffffff"  opacity="0.55"/><rect x="650.4" y="300.6" width="1.1" height="1.6" fill="#e0b4aa"  opacity="0.55"/><rect x="673.7" y="301.7" width="1.8" height="1.9" fill="#f6ece6"  opacity="0.55"/><rect x="634.7" y="307.9" width="2.1" height="1.1" fill="#f6ece6"  opacity="0.55"/><rect x="675.9" y="294.2" width="1.1" height="1.8" fill="#c98f86"  opacity="0.55"/><rect x="639.9" y="317.0" width="2.1" height="1.6" fill="#ffffff"  opacity="0.55"/><rect x="621.1" y="314.6" width="1.8" height="0.8" fill="#f6ece6"  opacity="0.55"/><rect x="653.0" y="311.2" width="1.9" height="1.3" fill="#ffffff"  opacity="0.55"/><rect x="648.4" y="341.6" width="1.5" height="1.8" fill="#f6ece6"  opacity="0.55"/><rect x="669.8" y="320.6" width="0.8" height="1.9" fill="#e0b4aa"  opacity="0.55"/><rect x="649.1" y="327.2" width="1.0" height="1.1" fill="#f6ece6"  opacity="0.55"/><rect x="624.4" y="296.0" width="1.2" height="1.7" fill="#e0b4aa"  opacity="0.55"/><rect x="616.5" y="356.3" width="1.4" height="1.9" fill="#c98f86"  opacity="0.55"/><rect x="640.1" y="316.4" width="1.3" height="1.1" fill="#c98f86"  opacity="0.55"/><rect x="613.0" y="337.3" width="2.0" height="1.1" fill="#f2e2da"  opacity="0.55"/><rect x="637.9" y="312.1" width="2.1" height="1.6" fill="#d9a79c"  opacity="0.55"/><rect x="648.9" y="285.2" width="2.1" height="1.9" fill="#ffffff"  opacity="0.55"/><rect x="675.0" y="353.1" width="2.1" height="1.6" fill="#f6ece6"  opacity="0.55"/><rect x="648.3" y="358.7" width="1.9" height="1.2" fill="#d9a79c"  opacity="0.55"/><rect x="665.6" y="343.1" width="1.9" height="1.4" fill="#c98f86"  opacity="0.55"/><rect x="675.3" y="336.8" width="1.9" height="1.9" fill="#f2e2da"  opacity="0.55"/><rect x="626.9" y="298.0" width="1.9" height="1.2" fill="#d9a79c"  opacity="0.55"/><rect x="612.8" y="311.0" width="1.7" height="1.7" fill="#f6ece6"  opacity="0.55"/><rect x="631.7" y="357.1" width="1.2" height="1.1" fill="#f2e2da"  opacity="0.55"/><rect x="653.0" y="324.5" width="1.3" height="2.2" fill="#ffffff"  opacity="0.55"/><rect x="627.4" y="293.1" width="1.4" height="1.6" fill="#d9a79c"  opacity="0.55"/><rect x="656.3" y="340.1" width="1.2" height="1.4" fill="#d9a79c"  opacity="0.55"/><rect x="666.8" y="333.2" width="0.8" height="1.2" fill="#c98f86"  opacity="0.55"/><rect x="677.2" y="325.8" width="1.5" height="2.2" fill="#e0b4aa"  opacity="0.55"/><rect x="672.9" y="291.6" width="1.4" height="1.7" fill="#e0b4aa"  opacity="0.55"/><rect x="655.0" y="341.7" width="0.9" height="2.1" fill="#f6ece6"  opacity="0.55"/><rect x="639.8" y="357.7" width="2.0" height="1.6" fill="#e0b4aa"  opacity="0.55"/><rect x="616.2" y="355.8" width="1.4" height="1.5" fill="#e0b4aa"  opacity="0.55"/><rect x="634.5" y="324.3" width="1.5" height="1.2" fill="#c98f86"  opacity="0.55"/><rect x="659.8" y="340.8" width="0.8" height="1.9" fill="#e0b4aa"  opacity="0.55"/><rect x="615.1" y="295.9" width="1.9" height="1.3" fill="#c98f86"  opacity="0.55"/><rect x="665.9" y="287.8" width="2.2" height="2.1" fill="#d9a79c"  opacity="0.55"/><rect x="669.4" y="301.0" width="1.8" height="1.2" fill="#f6ece6"  opacity="0.55"/><rect x="615.3" y="291.5" width="1.9" height="2.1" fill="#f6ece6"  opacity="0.55"/><rect x="682.5" y="346.1" width="1.6" height="1.0" fill="#e0b4aa"  opacity="0.55"/><rect x="642.0" y="293.0" width="2.0" height="1.3" fill="#f6ece6"  opacity="0.55"/><rect x="621.0" y="317.7" width="1.7" height="1.4" fill="#c98f86"  opacity="0.55"/><rect x="658.1" y="335.8" width="1.3" height="1.8" fill="#f6ece6"  opacity="0.55"/><rect x="680.6" y="339.8" width="1.1" height="1.0" fill="#c98f86"  opacity="0.55"/><rect x="668.5" y="331.5" width="1.3" height="1.2" fill="#ffffff"  opacity="0.55"/><rect x="664.2" y="337.1" width="1.1" height="1.2" fill="#f6ece6"  opacity="0.55"/><rect x="625.7" y="302.9" width="2.2" height="2.1" fill="#ffffff"  opacity="0.55"/><rect x="614.8" y="288.6" width="1.2" height="1.4" fill="#e0b4aa"  opacity="0.55"/><rect x="614.7" y="300.9" width="1.2" height="1.9" fill="#ffffff"  opacity="0.55"/><rect x="623.6" y="301.8" width="2.2" height="1.5" fill="#c98f86"  opacity="0.55"/><rect x="627.2" y="310.1" width="1.8" height="2.0" fill="#d9a79c"  opacity="0.55"/><rect x="669.8" y="318.0" width="2.0" height="2.0" fill="#f6ece6"  opacity="0.55"/><rect x="644.0" y="340.8" width="1.3" height="1.0" fill="#f6ece6"  opacity="0.55"/><rect x="659.1" y="359.2" width="1.3" height="1.6" fill="#ffffff"  opacity="0.55"/><rect x="671.5" y="298.0" width="1.7" height="1.6" fill="#f2e2da"  opacity="0.55"/><rect x="675.0" y="290.0" width="0.9" height="1.6" fill="#f2e2da"  opacity="0.55"/><rect x="670.7" y="319.2" width="2.0" height="0.8" fill="#c98f86"  opacity="0.55"/><rect x="627.4" y="334.3" width="0.9" height="1.2" fill="#ffffff"  opacity="0.55"/><rect x="667.0" y="308.9" width="2.0" height="1.1" fill="#ffffff"  opacity="0.55"/><rect x="664.3" y="311.8" width="1.0" height="1.8" fill="#e0b4aa"  opacity="0.55"/><rect x="654.8" y="352.6" width="1.8" height="1.2" fill="#e0b4aa"  opacity="0.55"/><rect x="669.8" y="307.2" width="1.2" height="1.4" fill="#ffffff"  opacity="0.55"/><rect x="676.4" y="302.9" width="1.3" height="1.3" fill="#c98f86"  opacity="0.55"/><rect x="660.7" y="328.4" width="1.9" height="1.8" fill="#c98f86"  opacity="0.55"/><rect x="669.4" y="325.1" width="2.0" height="1.6" fill="#f6ece6"  opacity="0.55"/><rect x="618.5" y="318.5" width="2.0" height="1.9" fill="#f6ece6"  opacity="0.55"/><rect x="649.1" y="325.4" width="1.6" height="2.2" fill="#ffffff"  opacity="0.55"/><rect x="672.6" y="316.1" width="1.6" height="1.2" fill="#e0b4aa"  opacity="0.55"/><rect x="618.1" y="290.2" width="1.8" height="2.1" fill="#d9a79c"  opacity="0.55"/><rect x="613.9" y="333.7" width="0.9" height="1.9" fill="#f2e2da"  opacity="0.55"/><rect x="629.7" y="300.8" width="1.9" height="1.5" fill="#f2e2da"  opacity="0.55"/><rect x="640.4" y="309.7" width="2.2" height="1.7" fill="#f2e2da"  opacity="0.55"/><rect x="647.1" y="345.2" width="0.9" height="1.7" fill="#d9a79c"  opacity="0.55"/><rect x="641.6" y="346.8" width="1.7" height="2.0" fill="#f2e2da"  opacity="0.55"/><rect x="672.0" y="351.5" width="2.1" height="1.7" fill="#e0b4aa"  opacity="0.55"/><rect x="620.0" y="300.0" width="2.6" height="40.0" fill="#f4e6de" /><rect x="622.6" y="300.0" width="1.0" height="40.0" fill="#d2b6aa" /><rect x="634.6" y="300.0" width="2.6" height="40.0" fill="#f4e6de" /><rect x="637.2" y="300.0" width="1.0" height="40.0" fill="#d2b6aa" /><rect x="660.0" y="300.0" width="2.6" height="40.0" fill="#f4e6de" /><rect x="662.6" y="300.0" width="1.0" height="40.0" fill="#d2b6aa" /><rect x="674.0" y="300.0" width="2.6" height="40.0" fill="#f4e6de" /><rect x="676.6" y="300.0" width="1.0" height="40.0" fill="#d2b6aa" /><path d="M621.6 277 C622 262 634 256 641.6 255.6 C652 256 661 262 662 277 C650 272 634 272 621.6 277 Z" fill="#2f7e71" /><path d="M628 274 C628 264 634 258 641.6 256 C640 262 639 268 639 273 Z" fill="#3f9486" /><path d="M646 273 C646 266 645 260 643 256 C650 258 656 264 657 274 Z" fill="#256a5f" /><path d="M638.6 256 C638.6 251 644.6 251 644.6 256 Z" fill="#2f7e71" /><path d="M640.8 251.6 L641.6 246 L642.4 251.6 Z" fill="#2a6a60" /><path d="M660 270 L666 268 L668 274 L664 280 Z" fill="#c9b5ac" /><path d="M621 312 C623 309 628 308 630 309 V332 H621.6 Z" fill="#55514a" /><rect x="623.0" y="313.0" width="5.0" height="17.0" fill="#7d8c84" /><rect x="643.4" y="306.6" width="12.6" height="25.4" fill="#4a463e" /><rect x="645.0" y="310.0" width="4.0" height="20.0" fill="#8a9a92" /><rect x="650.4" y="310.0" width="4.2" height="20.0" fill="#7a8a84" /><rect x="643.4" y="306.6" width="12.6" height="2.4" fill="#2d5a50" /><path d="M668 312 C670 310 674 311 675 313 V332 H668.6 Z" fill="#6a6258" /><rect x="615.0" y="332.0" width="21.0" height="8.0" fill="#efdcd2" /><rect x="638.0" y="331.0" width="26.0" height="8.0" fill="#f3e3da" /><rect x="664.0" y="333.0" width="16.0" height="7.0" fill="#ead4c9" /><rect x="617.0" y="334.0" width="0.9" height="5.0" fill="#caa89c" /><rect x="619.0" y="334.0" width="0.9" height="5.0" fill="#caa89c" /><rect x="621.0" y="334.0" width="0.9" height="5.0" fill="#caa89c" /><rect x="623.0" y="334.0" width="0.9" height="5.0" fill="#caa89c" /><rect x="625.0" y="334.0" width="0.9" height="5.0" fill="#caa89c" /><rect x="627.0" y="334.0" width="0.9" height="5.0" fill="#caa89c" /><rect x="629.0" y="334.0" width="0.9" height="5.0" fill="#caa89c" /><rect x="631.0" y="334.0" width="0.9" height="5.0" fill="#caa89c" /><rect x="633.0" y="334.0" width="0.9" height="5.0" fill="#caa89c" /><rect x="635.0" y="334.0" width="0.9" height="5.0" fill="#caa89c" /><rect x="640.0" y="333.0" width="0.9" height="5.0" fill="#caa89c" /><rect x="642.0" y="333.0" width="0.9" height="5.0" fill="#caa89c" /><rect x="644.0" y="333.0" width="0.9" height="5.0" fill="#caa89c" /><rect x="646.0" y="333.0" width="0.9" height="5.0" fill="#caa89c" /><rect x="648.0" y="333.0" width="0.9" height="5.0" fill="#caa89c" /><rect x="650.0" y="333.0" width="0.9" height="5.0" fill="#caa89c" /><rect x="652.0" y="333.0" width="0.9" height="5.0" fill="#caa89c" /><rect x="654.0" y="333.0" width="0.9" height="5.0" fill="#caa89c" /><rect x="656.0" y="333.0" width="0.9" height="5.0" fill="#caa89c" /><rect x="658.0" y="333.0" width="0.9" height="5.0" fill="#caa89c" /><rect x="660.0" y="333.0" width="0.9" height="5.0" fill="#caa89c" /><rect x="662.0" y="333.0" width="0.9" height="5.0" fill="#caa89c" /><path d="M612 340 C630 336 668 336 684 342 L684 345 C668 340 630 340 612 344 Z" fill="#d4b2a7" /><path d="M616 350 C620 346 626 346 628 350 V362 H616 Z" fill="#e8cfc4" /><path d="M617.6 362 C617.6 352 627 352 627.4 362 Z" fill="#2f2a28" /><path d="M640 362 C640 349 659 349 659 362 Z" fill="#2a2624" /><path d="M670 362 C670 352 678 352 678.6 362 Z" fill="#3a3431" /><path d="M630 344 L638 343 V362 H630 Z" fill="#f0ded4" /><path d="M660 343 L668 344 V362 H660 Z" fill="#ead3c8" /></g><rect x="603.8" y="231.4" width="92.0" height="129.2" filter="url(#n603_231)" opacity="0.22" style="mix-blend-mode:overlay"/></svg></div>
<div class="ph" style="left:603.8px;top:364.0px;width:92.0px;height:127.8px;background:#888"><svg width="92.0" height="127.8" viewBox="603.8 364.0 92.0 127.8"><defs><filter id="b603_364" x="-5%" y="-5%" width="110%" height="110%"><feGaussianBlur stdDeviation="0.45"/></filter><filter id="n603_364" x="0" y="0" width="100%" height="100%"><feTurbulence type="fractalNoise" baseFrequency="0.9" numOctaves="2" seed="967"/><feColorMatrix type="matrix" values="0 0 0 0 0.5  0 0 0 0 0.5  0 0 0 0 0.5  1.6 0 0 0 -0.55"/><feGaussianBlur stdDeviation="0.35"/></filter></defs><g filter="url(#b603_364)"><defs><linearGradient id="p8sky" x1="0" y1="0" x2="0" y2="1"><stop offset="0" stop-color="#1f7fd4"/><stop offset="0.45" stop-color="#3d97e0"/><stop offset="0.8" stop-color="#8cc3e8"/><stop offset="1" stop-color="#d4e6ee"/></linearGradient><linearGradient id="p8rd" x1="0" y1="0" x2="0" y2="1"><stop offset="0" stop-color="#9cc7e0"/><stop offset="1" stop-color="#5f9cc0"/></linearGradient></defs><rect x="603.0" y="362.0" width="94.0" height="61.0" fill="url(#p8sky)" /><rect x="603.0" y="422.0" width="94.0" height="72.0" fill="#3c4b4e" /><ellipse cx="690" cy="380" rx="9" ry="3" fill="#b7dbf2" opacity="0.8"/><ellipse cx="692" cy="392" rx="7" ry="5" fill="#a7d1ee" opacity="0.7"/><ellipse cx="640" cy="416" rx="12" ry="3" fill="#e4eef2" opacity="0.9"/><ellipse cx="610" cy="414" rx="8" ry="3" fill="#cfe3ee" opacity="0.8"/><rect x="603.0" y="423.0" width="94.0" height="15.0" fill="#4f5d63" /><rect x="603.0" y="422.4" width="94.0" height="3.6" fill="#6c7e86" /><rect x="605.0" y="429.0" width="2.2" height="0.0" fill="#7d8e95" /><rect x="610.0" y="428.0" width="2.2" height="1.0" fill="#7d8e95" /><rect x="615.0" y="427.0" width="2.2" height="2.0" fill="#7d8e95" /><rect x="620.0" y="426.0" width="2.2" height="3.0" fill="#7d8e95" /><rect x="625.0" y="429.0" width="2.2" height="0.0" fill="#7d8e95" /><rect x="630.0" y="428.0" width="2.2" height="1.0" fill="#7d8e95" /><rect x="635.0" y="427.0" width="2.2" height="2.0" fill="#7d8e95" /><rect x="640.0" y="426.0" width="2.2" height="3.0" fill="#7d8e95" /><rect x="645.0" y="429.0" width="2.2" height="0.0" fill="#7d8e95" /><rect x="650.0" y="428.0" width="2.2" height="1.0" fill="#7d8e95" /><rect x="655.0" y="427.0" width="2.2" height="2.0" fill="#7d8e95" /><rect x="660.0" y="426.0" width="2.2" height="3.0" fill="#7d8e95" /><rect x="665.0" y="429.0" width="2.2" height="0.0" fill="#7d8e95" /><rect x="670.0" y="428.0" width="2.2" height="1.0" fill="#7d8e95" /><rect x="675.0" y="427.0" width="2.2" height="2.0" fill="#7d8e95" /><rect x="680.0" y="426.0" width="2.2" height="3.0" fill="#7d8e95" /><rect x="685.0" y="429.0" width="2.2" height="0.0" fill="#7d8e95" /><rect x="690.0" y="428.0" width="2.2" height="1.0" fill="#7d8e95" /><rect x="695.0" y="427.0" width="2.2" height="2.0" fill="#7d8e95" /><path d="M607 421 L609 426 H605 Z" fill="#3a474c" /><rect x="616.0" y="424.0" width="3.0" height="12.0" fill="#3a474c" /><path d="M603 436 C610 430 620 432 624 438 C632 434 640 438 644 446 L640 462 H603 Z" fill="#3f4c38" /><path d="M612 438 C618 434 628 436 632 444 C630 452 620 454 612 450 Z" fill="#6b5e3a" /><path d="M604 446 C610 442 618 446 620 454 C616 462 606 462 604 456 Z" fill="#5a7a34" /><path d="M697 408 C690 412 688 420 684 426 C676 432 670 440 668 452 C672 462 680 468 697 470 Z" fill="#22332a" /><path d="M672 440 C678 434 688 436 692 444 C690 454 678 456 672 450 Z" fill="#2d4534" /><path d="M688 466 C692 462 697 462 697 462 V476 H686 Z" fill="#3f8a3c" /><rect x="625.9" y="439.2" width="1.7" height="1.5" fill="#a9b8bc"  opacity="0.7"/><rect x="657.4" y="441.0" width="2.8" height="1.4" fill="#6a7a80"  opacity="0.7"/><rect x="625.6" y="451.9" width="1.9" height="1.8" fill="#2c3a40"  opacity="0.7"/><rect x="640.5" y="448.1" width="1.5" height="1.0" fill="#6a7a80"  opacity="0.7"/><rect x="639.9" y="424.4" width="2.6" height="1.0" fill="#6a7a80"  opacity="0.7"/><rect x="607.9" y="445.8" width="2.6" height="1.1" fill="#6a7a80"  opacity="0.7"/><rect x="670.1" y="448.6" width="2.4" height="1.9" fill="#2c3a40"  opacity="0.7"/><rect x="671.0" y="440.2" width="2.9" height="1.0" fill="#35444a"  opacity="0.7"/><rect x="613.0" y="427.8" width="1.4" height="2.0" fill="#2c3a40"  opacity="0.7"/><rect x="675.7" y="447.9" width="1.8" height="1.8" fill="#6a7a80"  opacity="0.7"/><rect x="636.3" y="440.4" width="2.2" height="1.9" fill="#a9b8bc"  opacity="0.7"/><rect x="688.2" y="424.8" width="1.6" height="1.5" fill="#a9b8bc"  opacity="0.7"/><rect x="619.0" y="448.1" width="2.9" height="1.9" fill="#6a7a80"  opacity="0.7"/><rect x="613.6" y="442.4" width="2.3" height="2.0" fill="#35444a"  opacity="0.7"/><rect x="630.2" y="425.8" width="2.7" height="2.0" fill="#7f9096"  opacity="0.7"/><rect x="635.7" y="425.9" width="2.8" height="0.8" fill="#2c3a40"  opacity="0.7"/><rect x="674.7" y="448.4" width="1.1" height="1.5" fill="#7f9096"  opacity="0.7"/><rect x="638.8" y="440.4" width="2.1" height="1.9" fill="#35444a"  opacity="0.7"/><rect x="650.5" y="452.0" width="1.6" height="0.9" fill="#6a7a80"  opacity="0.7"/><rect x="653.3" y="450.6" width="2.9" height="1.1" fill="#35444a"  opacity="0.7"/><rect x="618.4" y="425.2" width="2.7" height="1.2" fill="#93a4aa"  opacity="0.7"/><rect x="686.5" y="434.6" width="1.9" height="1.4" fill="#a9b8bc"  opacity="0.7"/><rect x="683.7" y="443.1" width="1.2" height="2.0" fill="#6a7a80"  opacity="0.7"/><rect x="629.0" y="441.8" width="2.4" height="1.9" fill="#2c3a40"  opacity="0.7"/><rect x="694.0" y="438.6" width="2.1" height="0.8" fill="#2c3a40"  opacity="0.7"/><rect x="694.8" y="432.8" width="1.8" height="1.5" fill="#93a4aa"  opacity="0.7"/><rect x="609.5" y="441.6" width="1.9" height="1.6" fill="#35444a"  opacity="0.7"/><rect x="660.0" y="431.8" width="2.0" height="1.5" fill="#a9b8bc"  opacity="0.7"/><rect x="606.0" y="434.3" width="2.3" height="1.2" fill="#6a7a80"  opacity="0.7"/><rect x="633.4" y="434.2" width="1.6" height="1.2" fill="#6a7a80"  opacity="0.7"/><rect x="628.3" y="446.0" width="1.2" height="1.8" fill="#6a7a80"  opacity="0.7"/><rect x="666.9" y="427.7" width="2.0" height="1.6" fill="#35444a"  opacity="0.7"/><rect x="626.0" y="429.2" width="1.9" height="1.6" fill="#7f9096"  opacity="0.7"/><rect x="659.3" y="450.6" width="2.3" height="1.1" fill="#93a4aa"  opacity="0.7"/><rect x="611.4" y="444.8" width="1.4" height="1.5" fill="#35444a"  opacity="0.7"/><rect x="624.7" y="427.4" width="2.1" height="1.0" fill="#6a7a80"  opacity="0.7"/><rect x="620.9" y="431.8" width="2.6" height="1.6" fill="#6a7a80"  opacity="0.7"/><rect x="635.8" y="427.6" width="1.6" height="1.8" fill="#35444a"  opacity="0.7"/><rect x="646.8" y="441.8" width="1.6" height="1.5" fill="#7f9096"  opacity="0.7"/><rect x="688.7" y="428.4" width="1.0" height="1.9" fill="#6a7a80"  opacity="0.7"/><rect x="694.8" y="436.2" width="2.9" height="1.9" fill="#93a4aa"  opacity="0.7"/><rect x="607.0" y="436.8" width="2.5" height="1.7" fill="#35444a"  opacity="0.7"/><rect x="654.0" y="448.9" width="2.7" height="1.8" fill="#35444a"  opacity="0.7"/><rect x="615.0" y="430.8" width="1.1" height="1.8" fill="#6a7a80"  opacity="0.7"/><rect x="689.0" y="449.1" width="2.8" height="1.5" fill="#7f9096"  opacity="0.7"/><rect x="648.3" y="427.4" width="2.0" height="1.1" fill="#7f9096"  opacity="0.7"/><rect x="652.3" y="435.6" width="2.9" height="1.5" fill="#35444a"  opacity="0.7"/><rect x="615.5" y="451.2" width="2.1" height="1.8" fill="#7f9096"  opacity="0.7"/><rect x="636.4" y="429.5" width="2.1" height="1.8" fill="#93a4aa"  opacity="0.7"/><rect x="626.0" y="431.7" width="2.8" height="1.0" fill="#7f9096"  opacity="0.7"/><rect x="648.9" y="440.0" width="1.8" height="1.7" fill="#93a4aa"  opacity="0.7"/><rect x="628.7" y="438.8" width="1.8" height="1.4" fill="#7f9096"  opacity="0.7"/><rect x="682.8" y="445.7" width="1.1" height="0.9" fill="#2c3a40"  opacity="0.7"/><rect x="693.7" y="447.9" width="1.2" height="1.4" fill="#35444a"  opacity="0.7"/><rect x="618.4" y="426.0" width="1.8" height="1.3" fill="#35444a"  opacity="0.7"/><rect x="637.2" y="429.4" width="1.7" height="0.9" fill="#6a7a80"  opacity="0.7"/><rect x="604.3" y="444.2" width="2.6" height="1.5" fill="#7f9096"  opacity="0.7"/><rect x="638.3" y="440.9" width="2.6" height="1.3" fill="#7f9096"  opacity="0.7"/><rect x="661.3" y="436.1" width="1.7" height="1.4" fill="#a9b8bc"  opacity="0.7"/><rect x="633.0" y="450.6" width="1.8" height="0.8" fill="#93a4aa"  opacity="0.7"/><rect x="653.3" y="443.5" width="1.1" height="1.3" fill="#2c3a40"  opacity="0.7"/><rect x="616.0" y="424.8" width="1.7" height="2.0" fill="#6a7a80"  opacity="0.7"/><rect x="676.8" y="431.3" width="1.9" height="0.9" fill="#a9b8bc"  opacity="0.7"/><rect x="664.9" y="448.8" width="2.6" height="1.6" fill="#a9b8bc"  opacity="0.7"/><rect x="633.3" y="438.9" width="2.6" height="1.7" fill="#2c3a40"  opacity="0.7"/><rect x="617.2" y="445.7" width="1.1" height="0.9" fill="#7f9096"  opacity="0.7"/><rect x="664.6" y="434.5" width="2.6" height="1.2" fill="#7f9096"  opacity="0.7"/><rect x="606.3" y="427.2" width="2.0" height="1.6" fill="#35444a"  opacity="0.7"/><rect x="657.3" y="446.4" width="1.1" height="1.7" fill="#6a7a80"  opacity="0.7"/><rect x="652.7" y="430.7" width="2.1" height="0.9" fill="#6a7a80"  opacity="0.7"/><rect x="609.6" y="433.1" width="2.1" height="1.8" fill="#93a4aa"  opacity="0.7"/><rect x="695.8" y="442.1" width="1.9" height="1.6" fill="#2c3a40"  opacity="0.7"/><rect x="627.3" y="440.8" width="2.9" height="1.5" fill="#7f9096"  opacity="0.7"/><rect x="638.5" y="430.6" width="2.9" height="1.8" fill="#93a4aa"  opacity="0.7"/><rect x="642.2" y="439.9" width="2.2" height="1.9" fill="#a9b8bc"  opacity="0.7"/><rect x="648.5" y="442.0" width="2.8" height="1.0" fill="#7f9096"  opacity="0.7"/><rect x="649.8" y="437.5" width="2.4" height="1.9" fill="#6a7a80"  opacity="0.7"/><rect x="670.1" y="429.2" width="1.5" height="1.0" fill="#6a7a80"  opacity="0.7"/><rect x="651.4" y="450.2" width="2.7" height="1.4" fill="#35444a"  opacity="0.7"/><rect x="665.8" y="447.9" width="2.2" height="1.5" fill="#35444a"  opacity="0.7"/><rect x="685.8" y="432.6" width="1.5" height="1.8" fill="#93a4aa"  opacity="0.7"/><rect x="619.8" y="434.1" width="1.6" height="1.7" fill="#93a4aa"  opacity="0.7"/><rect x="642.5" y="443.5" width="2.4" height="1.0" fill="#6a7a80"  opacity="0.7"/><rect x="680.8" y="447.0" width="2.1" height="1.4" fill="#a9b8bc"  opacity="0.7"/><rect x="610.7" y="450.5" width="2.6" height="1.9" fill="#7f9096"  opacity="0.7"/><rect x="647.0" y="430.4" width="1.5" height="1.7" fill="#a9b8bc"  opacity="0.7"/><rect x="610.4" y="430.1" width="1.5" height="1.9" fill="#35444a"  opacity="0.7"/><rect x="616.6" y="441.4" width="2.4" height="0.8" fill="#35444a"  opacity="0.7"/><rect x="619.6" y="425.3" width="1.4" height="0.9" fill="#7f9096"  opacity="0.7"/><rect x="614.9" y="431.4" width="2.8" height="0.8" fill="#2c3a40"  opacity="0.7"/><path d="M657.8 428 L659.4 428 L661.6 452 L663 462 H651 L653.6 450 Z" fill="url(#p8rd)" /><path d="M658.2 430 L659 430 L659.4 456 H655.6 Z" fill="#c4deec"  opacity="0.8"/><path d="M648.6 453 L664.6 453 L666 462 H647 Z" fill="#5f94b4" /><path d="M603 468 L628 462 L640 460 H672 L686 464 L697 472 V494 H603 Z" fill="#4a5552" /><path d="M638 462 H672 V468 H638 Z" fill="#6a7672" /><path d="M603 474 L630 466 L634 494 H603 Z" fill="#55605a" /><path d="M676 466 L697 476 V494 H672 Z" fill="#4d5a54" /><path d="M642 468 H668 V494 H642 Z" fill="#1f2c30" /><path d="M650 470 H662 L663 494 H649 Z" fill="#3e86b0" /><rect x="654.0" y="474.0" width="4.0" height="20.0" fill="#a8d4ea" /><rect x="652.0" y="482.0" width="8.0" height="6.0" fill="#2a3a40" /><rect x="628.0" y="470.0" width="1.2" height="20.0" fill="#6f7a74" /><rect x="634.0" y="470.0" width="1.2" height="20.0" fill="#6f7a74" /><rect x="672.0" y="470.0" width="1.2" height="20.0" fill="#6f7a74" /><rect x="680.0" y="470.0" width="1.2" height="20.0" fill="#6f7a74" /><rect x="688.0" y="470.0" width="1.2" height="20.0" fill="#6f7a74" /></g><rect x="603.8" y="364.0" width="92.0" height="127.8" filter="url(#n603_364)" opacity="0.22" style="mix-blend-mode:overlay"/></svg></div>
<!-- sec_strip -->
<div class="abs" style="left:184px;top:508.5px;width:638px;height:67.5px;overflow:hidden"><div class="abs" style="left:-184px;top:-508.5px;width:1000px;height:591px">
<div class="abs" style="left:181.1px;top:514.8px;width:41.5px;height:58.8px;background:#030303;box-shadow:0 0 0 1.6px #ebebec;"></div>
<div class="abs" style="left:281.3px;top:514.8px;width:41.5px;height:58.8px;background:#030303;box-shadow:0 0 0 1.6px #ebebec;"></div>
<div class="abs" style="left:381.4px;top:514.8px;width:41.5px;height:58.8px;background:#030303;box-shadow:0 0 0 1.6px #ebebec;"></div>
<div class="abs" style="left:481.6px;top:514.8px;width:41.5px;height:58.8px;background:#030303;box-shadow:0 0 0 1.6px #ebebec;"></div>
<div class="abs" style="left:581.8px;top:514.8px;width:41.5px;height:58.8px;background:#030303;box-shadow:0 0 0 1.6px #ebebec;"></div>
<div class="abs" style="left:682.0px;top:514.8px;width:41.5px;height:58.8px;background:#030303;box-shadow:0 0 0 1.6px #ebebec;"></div>
<div class="abs" style="left:227.5px;top:514.8px;width:41.5px;height:58.8px;background:#030303;box-shadow:0 0 0 1.6px #ebebec;"></div>
<div class="abs" style="left:327.7px;top:514.8px;width:41.5px;height:58.8px;background:#030303;box-shadow:0 0 0 1.6px #ebebec;"></div>
<div class="abs" style="left:427.8px;top:514.8px;width:41.5px;height:58.8px;background:#030303;box-shadow:0 0 0 1.6px #ebebec;"></div>
<div class="abs" style="left:528.0px;top:514.8px;width:41.5px;height:58.8px;background:#030303;box-shadow:0 0 0 1.6px #ebebec;"></div>
<div class="abs" style="left:628.2px;top:514.8px;width:41.5px;height:58.8px;background:#030303;box-shadow:0 0 0 1.6px #ebebec;"></div>
<div class="abs" style="left:728.4px;top:514.8px;width:41.5px;height:58.8px;background:#030303;box-shadow:0 0 0 1.6px #ebebec;"></div>
<div class="abs" style="left:726.6px;top:513.2px;width:45.2px;height:62.6px;background:#030303;border:1.7px solid #3a84dc;box-shadow:0 0 1.6px #8dbcf2;"></div>
<div class="abs" style="left:182.3px;top:522.6px;width:18.6px;height:14.2px;background:#808081;border:0.75px solid #e4e4e4;"></div><div class="abs" style="left:182.3px;top:536.2px;width:18.6px;height:27.2px;background:#808081;border:0.75px solid #e4e4e4;"></div><div class="abs" style="left:200.3px;top:522.6px;width:19.4px;height:26.8px;background:#808081;border:0.75px solid #e4e4e4;"></div><div class="abs" style="left:200.3px;top:548.8px;width:19.4px;height:14.6px;background:#808081;border:0.75px solid #e4e4e4;"></div>
<div class="abs" style="left:282.5px;top:522.6px;width:18.6px;height:14.2px;background:#808081;border:0.75px solid #e4e4e4;"></div><div class="abs" style="left:282.5px;top:536.2px;width:18.6px;height:27.2px;background:#808081;border:0.75px solid #e4e4e4;"></div><div class="abs" style="left:300.5px;top:522.6px;width:19.4px;height:26.8px;background:#808081;border:0.75px solid #e4e4e4;"></div><div class="abs" style="left:300.5px;top:548.8px;width:19.4px;height:14.6px;background:#808081;border:0.75px solid #e4e4e4;"></div>
<div class="abs" style="left:229.8px;top:528.8px;width:22.5px;height:31.8px;background:#808081;border:0.75px solid #e4e4e4;"></div><div class="abs" style="left:251.7px;top:528.8px;width:15.0px;height:10.0px;background:#808081;border:0.75px solid #e4e4e4;"></div><div class="abs" style="left:251.7px;top:538.2px;width:15.0px;height:12.2px;background:#808081;border:0.75px solid #e4e4e4;"></div><div class="abs" style="left:251.7px;top:549.8px;width:15.0px;height:10.8px;background:#808081;border:0.75px solid #e4e4e4;"></div>
<div class="abs" style="left:330.0px;top:528.8px;width:22.5px;height:31.8px;background:#808081;border:0.75px solid #e4e4e4;"></div><div class="abs" style="left:351.9px;top:528.8px;width:15.0px;height:10.0px;background:#808081;border:0.75px solid #e4e4e4;"></div><div class="abs" style="left:351.9px;top:538.2px;width:15.0px;height:12.2px;background:#808081;border:0.75px solid #e4e4e4;"></div><div class="abs" style="left:351.9px;top:549.8px;width:15.0px;height:10.8px;background:#808081;border:0.75px solid #e4e4e4;"></div>
<div class="abs" style="left:383.2px;top:528.8px;width:14.8px;height:10.6px;background:#808081;border:0.75px solid #e4e4e4;"></div><div class="abs" style="left:383.2px;top:538.8px;width:14.8px;height:11.6px;background:#808081;border:0.75px solid #e4e4e4;"></div><div class="abs" style="left:383.2px;top:549.8px;width:14.8px;height:10.6px;background:#808081;border:0.75px solid #e4e4e4;"></div><div class="abs" style="left:397.4px;top:528.8px;width:22.8px;height:31.6px;background:#808081;border:0.75px solid #e4e4e4;"></div>
<div class="abs" style="left:432.5px;top:525.2px;width:34.5px;height:24.2px;background:#808081;border:0.75px solid #e4e4e4;"></div><div class="abs" style="left:432.5px;top:548.8px;width:12.3px;height:16.0px;background:#808081;border:0.75px solid #e4e4e4;"></div><div class="abs" style="left:455.2px;top:548.8px;width:11.8px;height:16.0px;background:#808081;border:0.75px solid #e4e4e4;"></div>
<div class="abs" style="left:444.4px;top:549.4px;width:11.4px;height:15.0px;background:#111;border:1px solid #ddd;"></div>
<svg class="abs" style="left:446.0px;top:551.4px;" width="8.4" height="11.2" viewBox="0 0 8.40 11.20"><path d="M1.2 1 L3.6 0.6 L7.4 7.8 L6.4 10 L4.4 9.6 L1 3.2 Z" fill="#e6e6e6"/></svg>
<div class="abs" style="left:488.1px;top:517.1px;width:27.1px;height:16.4px;background:#808081;border:0.75px solid #e4e4e4;"></div><div class="abs" style="left:491.9px;top:532.9px;width:23.3px;height:16.1px;background:#808081;border:0.75px solid #e4e4e4;"></div><div class="abs" style="left:499.8px;top:548.4px;width:15.4px;height:23.7px;background:#808081;border:0.75px solid #e4e4e4;"></div>
<div class="abs" style="left:536.1px;top:525.9px;width:26.4px;height:19.1px;background:#808081;border:0.75px solid #e4e4e4;"></div><div class="abs" style="left:536.1px;top:544.4px;width:26.4px;height:18.9px;background:#808081;border:0.75px solid #e4e4e4;"></div>
<div class="abs" style="left:587.1px;top:535.0px;width:29.5px;height:19.0px;background:#808081;border:0.75px solid #e4e4e4;"></div>
<div class="abs" style="left:638.0px;top:526.0px;width:25.2px;height:17.0px;background:#808081;border:0.75px solid #e4e4e4;"></div><div class="abs" style="left:638.0px;top:542.4px;width:25.2px;height:18.0px;background:#808081;border:0.75px solid #e4e4e4;"></div>
<div class="abs" style="left:689.6px;top:522.8px;width:10.8px;height:14.8px;background:#808081;border:0.75px solid #e4e4e4;"></div><div class="abs" style="left:689.6px;top:537.0px;width:10.8px;height:14.6px;background:#808081;border:0.75px solid #e4e4e4;"></div><div class="abs" style="left:689.6px;top:551.0px;width:10.8px;height:15.0px;background:#808081;border:0.75px solid #e4e4e4;"></div><div class="abs" style="left:699.8px;top:522.8px;width:17.0px;height:21.6px;background:#808081;border:0.75px solid #e4e4e4;"></div><div class="abs" style="left:699.8px;top:543.8px;width:17.0px;height:22.2px;background:#808081;border:0.75px solid #e4e4e4;"></div>
<div class="abs" style="left:742.8px;top:515.9px;width:14.9px;height:19.1px;background:#808081;border:0.75px solid #e4e4e4;"></div><div class="abs" style="left:742.8px;top:534.4px;width:14.9px;height:20.2px;background:#808081;border:0.75px solid #e4e4e4;"></div><div class="abs" style="left:742.8px;top:554.0px;width:14.9px;height:19.2px;background:#808081;border:0.75px solid #e4e4e4;"></div>
<div class="abs" style="left:181.1px;top:514.8px;width:12.4px;height:11.2px;background:#d9d9da;"></div>
<span class="t" style="left:182.5px;top:515.8px;font-size:9px;color:#333;letter-spacing:-0.00px;">28</span>
<div class="abs" style="left:256.4px;top:514.8px;width:12.6px;height:11.2px;background:#d9d9da;"></div>
<span class="t" style="left:257.6px;top:515.8px;font-size:9px;color:#333;letter-spacing:-0.00px;">29</span>
<div class="abs" style="left:281.3px;top:514.8px;width:12.4px;height:11.2px;background:#d9d9da;"></div>
<span class="t" style="left:282.7px;top:515.8px;font-size:9px;color:#333;letter-spacing:-0.00px;">30</span>
<div class="abs" style="left:356.6px;top:514.8px;width:12.6px;height:11.2px;background:#d9d9da;"></div>
<span class="t" style="left:357.8px;top:515.8px;font-size:9px;color:#333;letter-spacing:-0.00px;">31</span>
<div class="abs" style="left:381.4px;top:514.8px;width:12.4px;height:11.2px;background:#d9d9da;"></div>
<span class="t" style="left:382.8px;top:515.8px;font-size:9px;color:#333;letter-spacing:-0.00px;">32</span>
<div class="abs" style="left:456.7px;top:514.8px;width:12.6px;height:11.2px;background:#d9d9da;"></div>
<span class="t" style="left:457.9px;top:515.8px;font-size:9px;color:#333;letter-spacing:-0.00px;">33</span>
<div class="abs" style="left:481.6px;top:514.8px;width:12.4px;height:11.2px;background:#d9d9da;"></div>
<span class="t" style="left:483.0px;top:515.8px;font-size:9px;color:#333;letter-spacing:-0.00px;">34</span>
<div class="abs" style="left:556.9px;top:514.8px;width:12.6px;height:11.2px;background:#d9d9da;"></div>
<span class="t" style="left:558.1px;top:515.8px;font-size:9px;color:#333;letter-spacing:-0.00px;">35</span>
<div class="abs" style="left:581.8px;top:514.8px;width:12.4px;height:11.2px;background:#d9d9da;"></div>
<span class="t" style="left:583.2px;top:515.8px;font-size:9px;color:#333;letter-spacing:-0.00px;">36</span>
<div class="abs" style="left:657.1px;top:514.8px;width:12.6px;height:11.2px;background:#d9d9da;"></div>
<span class="t" style="left:658.3px;top:515.8px;font-size:9px;color:#333;letter-spacing:-0.00px;">37</span>
<div class="abs" style="left:682.0px;top:514.8px;width:12.4px;height:11.2px;background:#d9d9da;"></div>
<span class="t" style="left:683.4px;top:515.8px;font-size:9px;color:#333;letter-spacing:-0.00px;">38</span>
<div class="abs" style="left:757.2px;top:514.8px;width:12.6px;height:11.2px;background:#d9d9da;"></div>
<span class="t" style="left:758.5px;top:515.8px;font-size:9px;color:#333;letter-spacing:-0.00px;">39</span>
</div></div>
<div class="abs" style="left:633.0px;top:577.4px;width:173.0px;height:13.6px;background:#cdcdce;"></div>
<svg class="abs" style="left:189.6px;top:580.0px;" width="4.4" height="7.4" viewBox="0 0 4.40 7.40"><path d="M3.8 0.5 L0.8 3.7 L3.8 6.9" fill="none" stroke="#444" stroke-width="1.3"/></svg>
<svg class="abs" style="left:812.4px;top:580.0px;" width="4.4" height="7.4" viewBox="0 0 4.40 7.40"><path d="M0.6 0.5 L3.6 3.7 L0.6 6.9" fill="none" stroke="#444" stroke-width="1.3"/></svg>
<!-- sec_right -->
<div class="abs" style="left:822.0px;top:71.0px;width:1.4px;height:520.0px;background:#ebebec;"></div>
<span class="t" style="left:828.3px;top:76.0px;font-size:11.6px;color:#2a2a2a;transform:scaleX(0.882);transform-origin:0 50%;">TOOLS</span>
<div class="abs" style="left:823.0px;top:95.4px;width:177.0px;height:1.0px;background:#cfcfd0;"></div>
<div class="abs" style="left:823.0px;top:99.2px;width:177.0px;height:11.0px;background:#d6d6d7;"></div>
<span class="t" style="left:827.0px;top:100.9px;font-size:7.2px;color:#3a3a3a;transform:scaleX(0.968);transform-origin:0 50%;">Appearance</span>
<span class="t" style="left:828.0px;top:118.4px;font-size:7.2px;color:#444;transform:scaleX(0.895);transform-origin:0 50%;">Rotation</span>
<div class="abs" style="left:857.4px;top:115.4px;width:25.6px;height:14.0px;background:#e9e9ea;"></div>
<svg class="abs" style="left:856px;top:114px" width="44" height="18" viewBox="856 114 44 18"><g fill="none" stroke="#4a4a4b" stroke-width="1.5" stroke-linecap="round"><path d="M868.4 118.8 C864 117.8 861.6 121 861.8 124.6"/><path d="M872.2 118.8 C876.6 117.8 879 121 878.8 124.6"/></g><path d="M859.4 123.6 H864.4 L861.9 127.8 Z" fill="#4a4a4b"/><path d="M876.4 123.6 H881.4 L878.9 127.8 Z" fill="#4a4a4b"/><g fill="none" stroke="#5a5a5b" stroke-width="1.3"><path d="M889.6 118.2 C886 120 886 125 889.6 126.8"/><path d="M892.8 118.2 C896.4 120 896.4 125 892.8 126.8"/></g><path d="M888.4 116.4 L891.8 118 L889 120.4 Z" fill="#5a5a5b"/><path d="M894 128.6 L890.6 127 L893.4 124.6 Z" fill="#5a5a5b"/></svg>
<span class="t" style="left:900.2px;top:118.4px;font-size:7.2px;color:#a8a8a9;transform:scaleX(0.959);transform-origin:0 50%;">Clear</span>
<span class="t" style="left:912.0px;top:132.6px;font-size:6.8px;color:#333;transform:scaleX(0.961);transform-origin:0 50%;">256</span>
<span class="t" style="left:828.0px;top:142.8px;font-size:7.2px;color:#444;transform:scaleX(0.922);transform-origin:0 50%;">Opacity</span>
<svg class="abs" style="left:858.4px;top:143.6px;" width="12.0" height="11.6" viewBox="0 0 12.00 11.60"><defs><pattern id="ckA" width="3.4" height="3.4" patternUnits="userSpaceOnUse"><polygon points="1.7,0 3.4,1.7 1.7,3.4 0,1.7" fill="#c6c6c7"/></pattern><clipPath id="ckAc"><circle cx="6" cy="5.8" r="6"/></clipPath></defs><g clip-path="url(#ckAc)"><rect width="12" height="11.6" fill="#e9e9ea"/><rect width="12" height="11.6" fill="url(#ckA)"/></g></svg>
<div class="abs" style="left:880.0px;top:149.8px;width:70.0px;height:1.6px;background:#efeff0;"></div>
<svg class="abs" style="left:949.6px;top:144.0px;" width="8.4" height="13.2" viewBox="0 0 8.40 13.20"><path d="M0.6 0.4 H7.8 V9.6 L4.2 13 L0.6 9.6 Z" fill="#c8c8c9"/></svg>
<svg class="abs" style="left:965.0px;top:143.4px;" width="12.0" height="11.6" viewBox="0 0 12.00 11.60"><defs><pattern id="ckB" width="3.4" height="3.4" patternUnits="userSpaceOnUse"><polygon points="1.7,0 3.4,1.7 1.7,3.4 0,1.7" fill="#0c0c0c"/></pattern><clipPath id="ckBc"><circle cx="6" cy="5.8" r="6"/></clipPath></defs><g clip-path="url(#ckBc)"><rect width="12" height="11.6" fill="#f4f4f4"/><rect width="12" height="11.6" fill="url(#ckB)"/></g></svg>
<div class="abs" style="left:823.0px;top:165.6px;width:177.0px;height:11.0px;background:#d6d6d7;"></div>
<span class="t" style="left:827.0px;top:167.3px;font-size:7.2px;color:#3a3a3a;letter-spacing:0.30px;">Colour</span>
<span class="t" style="left:828.0px;top:185.2px;font-size:7.2px;color:#444;transform:scaleX(0.932);transform-origin:0 50%;">Enhance</span>
<div class="abs" style="left:870.4px;top:186.0px;width:7.6px;height:8.0px;background:#f6f6f7;border-top:1.4px solid #a8a8a9;border-left:1.4px solid #a8a8a9;"></div>
<svg class="abs" style="left:928px;top:180px" width="20" height="20" viewBox="928 180 20 20"><circle cx="935.6" cy="184.1" r="1.15" fill="#1f1f20"/><path d="M934.4 185.4 L936.9 185.9 L937.7 189.6 L936.2 196.7 L931.7 196.1 L930.5 192.6 L932.4 188.4 Z" fill="#1f1f20"/><path d="M936.4 187.6 L943.2 185.6" stroke="#1f1f20" stroke-width="0.9"/><path d="M944.5 182.6 L940.3 196.9" stroke="#1f1f20" stroke-width="0.9"/><circle cx="944.3" cy="183.4" r="0.9" fill="#1f1f20"/><path d="M936.4 196.9 L939.5 189.6 L940.4 196.9 Z" fill="#8f8f90"/><path d="M932.4 191.6 L934 190.6 L934.2 192.6 Z" fill="#e1e1e2"/></svg>
<span class="t" style="left:943.8px;top:189.6px;font-size:4.7px;color:#3a3a3b;transform:scaleX(0.919);transform-origin:0 50%;font-weight:bold;font-family:'Liberation Serif',serif;">PERFECTLY CLEAR</span>
<span class="t" style="left:828.0px;top:207.6px;font-size:7.2px;color:#444;transform:scaleX(0.901);transform-origin:0 50%;">Presets</span>
<svg class="abs" style="left:868.0px;top:207.0px;" width="11.0" height="9.4" viewBox="0 0 11.00 9.40"><rect width="11" height="9.4" fill="#b5b5b6"/><rect width="5.6" height="4.8" fill="#8e8e8f"/><rect x="5.6" y="4.8" width="5.4" height="4.6" fill="#8e8e8f"/></svg>
<svg class="abs" style="left:882.2px;top:207.0px;" width="11.0" height="9.4" viewBox="0 0 11.00 9.40"><rect width="11" height="9.4" fill="#c2c2c3"/><rect width="5.6" height="4.8" fill="#a0a0a1"/><rect x="5.6" y="4.8" width="5.4" height="4.6" fill="#a0a0a1"/></svg>
<svg class="abs" style="left:896.4px;top:207.0px;" width="11.0" height="9.4" viewBox="0 0 11.00 9.40"><rect width="11" height="9.4" fill="#d4d4d5"/><rect width="5.6" height="4.8" fill="#c4c4c5"/><rect x="5.6" y="4.8" width="5.4" height="4.6" fill="#c4c4c5"/></svg>
<svg class="abs" style="left:910.6px;top:207.0px;" width="11.0" height="9.4" viewBox="0 0 11.00 9.40"><rect width="11" height="9.4" fill="#cccccd"/><rect width="5.6" height="4.8" fill="#b4b4b5"/><rect x="5.6" y="4.8" width="5.4" height="4.6" fill="#b4b4b5"/></svg>
<span class="t" style="left:925.0px;top:221.6px;font-size:6.8px;color:#333;">0</span>
<span class="t" style="left:828.0px;top:236.8px;font-size:7.2px;color:#444;transform:scaleX(0.975);transform-origin:0 50%;">Saturation</span>
<svg class="abs" style="left:868.0px;top:233.8px;" width="11.0" height="9.8" viewBox="0 0 11.00 9.80"><rect width="11" height="9.8" fill="#9a9a9b"/><rect width="7" height="6" fill="#151516"/><rect x="7" y="6" width="4" height="3.8" fill="#555"/></svg>
<div class="abs" style="left:887.0px;top:240.4px;width:81.3px;height:1.6px;background:#ebebec;"></div>
<svg class="abs" style="left:922.8px;top:232.6px;" width="8.4" height="14.4" viewBox="0 0 8.40 14.40"><path d="M0.6 0.4 H7.8 V10.4 L4.2 14 L0.6 10.4 Z" fill="#d0d0d1"/></svg>
<svg class="abs" style="left:974.4px;top:233.8px;" width="11.0" height="9.8" viewBox="0 0 11.00 9.80"><rect width="11" height="9.8" fill="#2a2a2b"/><rect x="6" y="0" width="5" height="4.6" fill="#777"/><rect x="0" y="5.6" width="5" height="4.2" fill="#666"/></svg>
<span class="t" style="left:925.0px;top:253.2px;font-size:6.8px;color:#333;">0</span>
<span class="t" style="left:828.0px;top:269.0px;font-size:7.2px;color:#444;transform:scaleX(0.909);transform-origin:0 50%;">Hue</span>
<svg class="abs" style="left:868.0px;top:266.3px;" width="11.0" height="9.1" viewBox="0 0 11.00 9.10"><rect width="11" height="9.1" fill="#3a3a3b"/><path d="M0 3 L5 1.6 L11 4 V5.6 L5 4 L0 5.6 Z" fill="#bbb"/></svg>
<div class="abs" style="left:887.0px;top:271.6px;width:81.3px;height:1.6px;background:#ebebec;"></div>
<svg class="abs" style="left:922.8px;top:264.4px;" width="8.4" height="14.6" viewBox="0 0 8.40 14.60"><path d="M0.6 0.4 H7.8 V10.6 L4.2 14.2 L0.6 10.6 Z" fill="#d0d0d1"/></svg>
<svg class="abs" style="left:974.4px;top:266.3px;" width="11.0" height="9.1" viewBox="0 0 11.00 9.10"><rect width="11" height="9.1" fill="#2a2a2b"/><path d="M0 5.6 L5 3.6 L11 6 V7.4 L5 5.4 L0 7.2 Z" fill="#999"/></svg>
<div class="abs" style="left:823.0px;top:284.4px;width:177.0px;height:11.8px;background:#d6d6d7;"></div>
<span class="t" style="left:827.0px;top:286.5px;font-size:7.2px;color:#3a3a3a;transform:scaleX(0.968);transform-origin:0 50%;">Position</span>
<div class="abs" style="left:826.6px;top:302.8px;width:10.4px;height:12.4px;background:#f2f2f3;border-radius:1.5px;"></div>
<svg class="abs" style="left:828.0px;top:304.0px;" width="8.4" height="10.6" viewBox="0 0 8.40 10.60"><path d="M1.7 3.4 V6 C1.7 9.6 6.7 9.6 6.7 6 V3.4" fill="none" stroke="#1c1c1d" stroke-width="2.3"/><path d="M0.6 1.2 H2.8 M5.6 1.2 H7.8" stroke="#1c1c1d" stroke-width="1.2" stroke-dasharray="0.7 0.5"/></svg>
<span class="t" style="left:838.4px;top:304.6px;font-size:7.2px;color:#333;transform:scaleX(0.963);transform-origin:0 50%;">Snap-dragging</span>
<svg class="abs" style="left:892.2px;top:303.4px;" width="6.2" height="11.0" viewBox="0 0 6.20 11.00"><path d="M4.2 0 L0.2 6 H2.8 L1.4 11 L6 4.4 H3.4 Z" fill="#1c1c1d"/></svg>
<span class="t" style="left:900.0px;top:304.6px;font-size:7.2px;color:#333;letter-spacing:0.07px;">Snap All</span>
<svg class="abs" style="left:936.7px;top:304.4px;" width="15.3" height="9.4" viewBox="0 0 15.30 9.40"><rect x="0.5" y="0.5" width="14.3" height="8.4" fill="#6a6a6b" stroke="#222" stroke-width="1"/><path d="M1.6 6.4 C4 2 6 2 7.6 5 C9.2 2 11.2 2 13.6 6.4" fill="none" stroke="#eee" stroke-width="1"/></svg>
<span class="t" style="left:953.3px;top:304.6px;font-size:7.2px;color:#333;transform:scaleX(0.974);transform-origin:0 50%;">Mirror</span>
<div class="abs" style="left:827.6px;top:320.8px;width:8.4px;height:8.6px;background:#f7f7f8;"></div>
<svg class="abs" style="left:829.4px;top:322.4px;" width="5.6" height="5.6" viewBox="0 0 5.60 5.60"><path d="M0.6 2.8 L2.2 4.6 L5 0.8" fill="none" stroke="#d2d2d3" stroke-width="1"/></svg>
<span class="t" style="left:839.2px;top:320.9px;font-size:7.2px;color:#333;transform:scaleX(0.977);transform-origin:0 50%;">Adjust selection as a group</span>
<svg class="abs" style="left:828.2px;top:339.8px;" width="25.4" height="21.4" viewBox="0 0 25.40 21.40"><rect x="0.4" y="0.4" width="24.6" height="20.6" fill="#e6e6e7" stroke="#d2d2d3" stroke-width="0.7"/><rect x="7.2" y="6.8" width="11.6" height="7.4" fill="#b9b9ba" stroke="#8c8c8d" stroke-width="0.9"/><path d="M1.6 10.5 L4.8 10.5" stroke="#5a5a5b" stroke-width="0.8"/><path d="M5.6 10.5 L3.6 11.8 L3.6 9.2 Z" fill="#5a5a5b"/><path d="M24.0 10.5 L20.8 10.5" stroke="#5a5a5b" stroke-width="0.8"/><path d="M20.0 10.5 L22.0 9.2 L22.0 11.8 Z" fill="#5a5a5b"/><path d="M13.0 1.4 L13.0 4.4" stroke="#5a5a5b" stroke-width="0.8"/><path d="M13.0 5.2 L11.7 3.2 L14.3 3.2 Z" fill="#5a5a5b"/><path d="M13.0 19.8 L13.0 16.8" stroke="#5a5a5b" stroke-width="0.8"/><path d="M13.0 16.0 L14.3 18.0 L11.7 18.0 Z" fill="#5a5a5b"/></svg>
<svg class="abs" style="left:863.2px;top:339.8px;" width="25.4" height="21.4" viewBox="0 0 25.40 21.40"><rect x="0.4" y="0.4" width="24.6" height="20.6" fill="#e6e6e7" stroke="#d2d2d3" stroke-width="0.7"/><rect x="6.6" y="6.8" width="12.0" height="7.4" fill="#b9b9ba" stroke="#8c8c8d" stroke-width="0.9"/><path d="M1.4 10.5 L4.4 10.5" stroke="#5a5a5b" stroke-width="0.8"/><path d="M5.2 10.5 L3.2 11.8 L3.2 9.2 Z" fill="#5a5a5b"/><path d="M23.8 10.5 L20.8 10.5" stroke="#5a5a5b" stroke-width="0.8"/><path d="M20.0 10.5 L22.0 9.2 L22.0 11.8 Z" fill="#5a5a5b"/></svg>
<svg class="abs" style="left:898.5px;top:339.8px;" width="25.4" height="21.4" viewBox="0 0 25.40 21.40"><rect x="0.4" y="0.4" width="24.6" height="20.6" fill="#e6e6e7" stroke="#d2d2d3" stroke-width="0.7"/><rect x="6.4" y="6.8" width="11.2" height="7.4" fill="#b9b9ba" stroke="#8c8c8d" stroke-width="0.9"/><path d="M12.0 1.4 L12.0 4.4" stroke="#5a5a5b" stroke-width="0.8"/><path d="M12.0 5.2 L10.7 3.2 L13.3 3.2 Z" fill="#5a5a5b"/><path d="M12.0 19.8 L12.0 16.8" stroke="#5a5a5b" stroke-width="0.8"/><path d="M12.0 16.0 L13.3 18.0 L10.7 18.0 Z" fill="#5a5a5b"/></svg>
<svg class="abs" style="left:934.0px;top:339.8px;" width="25.4" height="21.4" viewBox="0 0 25.40 21.40"><rect x="6.2" y="6.6" width="13.2" height="8.0" fill="#aaaaab" stroke="#555" stroke-width="1.1"/><path d="M5.0 10.6 L2.4 10.6" stroke="#5a5a5b" stroke-width="0.8"/><path d="M1.6 10.6 L3.6 9.3 L3.6 11.9 Z" fill="#5a5a5b"/><path d="M20.6 10.6 L23.2 10.6" stroke="#5a5a5b" stroke-width="0.8"/><path d="M24.0 10.6 L22.0 11.9 L22.0 9.3 Z" fill="#5a5a5b"/><path d="M12.8 5.6 L12.8 3.0" stroke="#5a5a5b" stroke-width="0.8"/><path d="M12.8 2.2 L14.1 4.2 L11.5 4.2 Z" fill="#5a5a5b"/><path d="M12.8 15.6 L12.8 18.2" stroke="#5a5a5b" stroke-width="0.8"/><path d="M12.8 19.0 L11.5 17.0 L14.1 17.0 Z" fill="#5a5a5b"/><g stroke="#5a5a5b" stroke-width="0.9"><path d="M4.6 5 L1.6 2.2 M1.2 4 V1.8 H3.4"/><path d="M21 5 L24 2.2 M24.4 4 V1.8 H22.2"/><path d="M4.6 16.4 L1.6 19.2 M1.2 17.4 V19.6 H3.4"/><path d="M21 16.4 L24 19.2 M24.4 17.4 V19.6 H22.2"/></g></svg>
<svg class="abs" style="left:968.9px;top:339.8px;" width="24.5" height="21.4" viewBox="0 0 24.50 21.40"><path d="M0.4 0.9 H24 M0.4 19.2 H24" stroke="#8a8a8b" stroke-width="0.9"/><rect x="4.4" y="5.2" width="15.2" height="9.6" fill="#b9b9ba" stroke="#8c8c8d" stroke-width="0.9"/><rect x="10.6" y="0.8" width="3.6" height="20" fill="#8a8a8b" stroke="#6a6a6b" stroke-width="0.6"/><path d="M3.6 10.2 L1.6 10.2" stroke="#5a5a5b" stroke-width="0.8"/><path d="M0.8 10.2 L2.8 8.9 L2.8 11.5 Z" fill="#5a5a5b"/><path d="M20.4 10.2 L22.4 10.2" stroke="#5a5a5b" stroke-width="0.8"/><path d="M23.2 10.2 L21.2 11.5 L21.2 8.9 Z" fill="#5a5a5b"/></svg>
<svg class="abs" style="left:829.1px;top:372.2px;" width="16.2" height="18.0" viewBox="0 0 16.20 18.00"><rect x="0.5" y="0.5" width="11.4" height="6.6" fill="#b9b9ba" stroke="#8c8c8d" stroke-width="0.9"/><rect x="6.4" y="10.0" width="9.4" height="7.4" fill="#b9b9ba" stroke="#8c8c8d" stroke-width="0.9"/><path d="M5.2 13.8 L2.2 13.8" stroke="#5a5a5b" stroke-width="0.8"/><path d="M1.4 13.8 L3.4 12.5 L3.4 15.1 Z" fill="#5a5a5b"/></svg>
<svg class="abs" style="left:856.7px;top:372.2px;" width="15.0" height="18.0" viewBox="0 0 15.00 18.00"><rect x="0.5" y="0.5" width="14.0" height="6.6" fill="#b9b9ba" stroke="#8c8c8d" stroke-width="0.9"/><rect x="3.8" y="10.0" width="7.8" height="7.0" fill="#b9b9ba" stroke="#8c8c8d" stroke-width="0.9"/></svg>
<svg class="abs" style="left:882.9px;top:372.2px;" width="16.5" height="18.0" viewBox="0 0 16.50 18.00"><rect x="4.4" y="0.5" width="11.4" height="6.6" fill="#b9b9ba" stroke="#8c8c8d" stroke-width="0.9"/><rect x="0.5" y="10.0" width="9.4" height="7.4" fill="#b9b9ba" stroke="#8c8c8d" stroke-width="0.9"/><path d="M10.8 13.8 L13.8 13.8" stroke="#5a5a5b" stroke-width="0.8"/><path d="M14.6 13.8 L12.6 15.1 L12.6 12.5 Z" fill="#5a5a5b"/></svg>
<svg class="abs" style="left:910.1px;top:372.2px;" width="18.0" height="18.0" viewBox="0 0 18.00 18.00"><rect x="0.5" y="6.8" width="7.8" height="10.6" fill="#b9b9ba" stroke="#8c8c8d" stroke-width="0.9"/><rect x="10.4" y="0.5" width="7.2" height="11.6" fill="#b9b9ba" stroke="#8c8c8d" stroke-width="0.9"/><path d="M4.4 5.8 L4.4 2.8" stroke="#5a5a5b" stroke-width="0.8"/><path d="M4.4 2.0 L5.7 4.0 L3.1 4.0 Z" fill="#5a5a5b"/></svg>
<svg class="abs" style="left:938.2px;top:372.2px;" width="18.0" height="18.0" viewBox="0 0 18.00 18.00"><rect x="0.5" y="1.8" width="7.8" height="15.6" fill="#b9b9ba" stroke="#8c8c8d" stroke-width="0.9"/><rect x="10.6" y="5.0" width="6.8" height="7.4" fill="#b9b9ba" stroke="#8c8c8d" stroke-width="0.9"/></svg>
<svg class="abs" style="left:967.0px;top:372.2px;" width="17.6" height="18.0" viewBox="0 0 17.60 18.00"><rect x="0.5" y="4.6" width="7.2" height="12.8" fill="#b9b9ba" stroke="#8c8c8d" stroke-width="0.9"/><rect x="9.8" y="0.5" width="7.2" height="8.6" fill="#b9b9ba" stroke="#8c8c8d" stroke-width="0.9"/><path d="M13.4 10.2 L13.4 14.2" stroke="#5a5a5b" stroke-width="0.8"/><path d="M13.4 15.0 L12.1 13.0 L14.7 13.0 Z" fill="#5a5a5b"/></svg>
<div class="abs" style="left:823.0px;top:398.4px;width:177.0px;height:10.2px;background:#d6d6d7;"></div>
<span class="t" style="left:827.0px;top:399.7px;font-size:7.2px;color:#3a3a3a;transform:scaleX(0.907);transform-origin:0 50%;">Size</span>
<svg class="abs" style="left:828.3px;top:416.0px;" width="24.3" height="18.4" viewBox="0 0 24.30 18.40"><rect x="0.5" y="0.5" width="23.3" height="17.4" fill="#b9b9ba" stroke="#8c8c8d" stroke-width="1.1"/></svg>
<svg class="abs" style="left:863.6px;top:416.0px;" width="23.5" height="18.4" viewBox="0 0 23.50 18.40"><rect x="0.4" y="0.4" width="22.7" height="17.6" fill="#ececed" stroke="#c4c4c5" stroke-width="0.7"/><rect x="6.6" y="0.5" width="10.4" height="17.4" fill="#b9b9ba" stroke="#8c8c8d" stroke-width="1.1"/></svg>
<svg class="abs" style="left:898.5px;top:416.0px;" width="24.4" height="18.4" viewBox="0 0 24.40 18.40"><rect x="0.5" y="0.5" width="23.4" height="17.4" fill="#d9d9da" stroke="#8c8c8d" stroke-width="1"/><rect x="3.6" y="3.2" width="17.2" height="12.0" fill="#b9b9ba" stroke="#8c8c8d" stroke-width="1"/></svg>
<svg class="abs" style="left:933.0px;top:416.0px;" width="24.0" height="18.4" viewBox="0 0 24.00 18.40"><rect x="0.5" y="0.5" width="23" height="17.4" fill="#e6e6e7" stroke="#8c8c8d" stroke-width="1"/><rect x="6.6" y="2.6" width="10.8" height="13.2" fill="#b9b9ba" stroke="#8c8c8d" stroke-width="1"/></svg>
<svg class="abs" style="left:829.5px;top:444.4px;" width="15.0" height="17.6" viewBox="0 0 15.00 17.60"><rect x="0.5" y="1.0" width="14.0" height="15.6" fill="#a4a4a5" stroke="#8c8c8d" stroke-width="0.9"/><rect x="4.6" y="5.4" width="5.8" height="6.8" fill="#cfcfd0" stroke="#8c8c8d" stroke-width="0.9"/><path d="M7.5 4.6 L7.5 3.0" stroke="#555" stroke-width="0.8"/><path d="M7.5 2.2 L8.8 4.2 L6.2 4.2 Z" fill="#555"/><path d="M7.5 13.0 L7.5 14.6" stroke="#555" stroke-width="0.8"/><path d="M7.5 15.4 L6.2 13.4 L8.8 13.4 Z" fill="#555"/><path d="M3.8 8.8 L2.4 8.8" stroke="#555" stroke-width="0.8"/><path d="M1.6 8.8 L3.6 7.5 L3.6 10.1 Z" fill="#555"/><path d="M11.2 8.8 L12.6 8.8" stroke="#555" stroke-width="0.8"/><path d="M13.4 8.8 L11.4 10.1 L11.4 7.5 Z" fill="#555"/></svg>
<svg class="abs" style="left:855.9px;top:444.4px;" width="15.8" height="17.6" viewBox="0 0 15.80 17.60"><rect x="2.0" y="0.6" width="12.0" height="6.0" fill="#b9b9ba" stroke="#8c8c8d" stroke-width="0.9"/><rect x="4.6" y="10.4" width="6.6" height="6.4" fill="#b9b9ba" stroke="#8c8c8d" stroke-width="0.9"/><path d="M3.8 13.6 L2.0 13.6" stroke="#555" stroke-width="0.8"/><path d="M1.2 13.6 L3.2 12.3 L3.2 14.9 Z" fill="#555"/><path d="M12.0 13.6 L13.8 13.6" stroke="#555" stroke-width="0.8"/><path d="M14.6 13.6 L12.6 14.9 L12.6 12.3 Z" fill="#555"/></svg>
<svg class="abs" style="left:882.3px;top:444.4px;" width="16.2" height="17.6" viewBox="0 0 16.20 17.60"><rect x="9.4" y="1.0" width="6.0" height="15.6" fill="#b9b9ba" stroke="#8c8c8d" stroke-width="0.9"/><rect x="1.6" y="5.6" width="5.0" height="6.4" fill="#b9b9ba" stroke="#8c8c8d" stroke-width="0.9"/><path d="M4.1 4.8 L4.1 3.0" stroke="#555" stroke-width="0.8"/><path d="M4.1 2.2 L5.4 4.2 L2.8 4.2 Z" fill="#555"/><path d="M4.1 12.8 L4.1 14.6" stroke="#555" stroke-width="0.8"/><path d="M4.1 15.4 L2.8 13.4 L5.4 13.4 Z" fill="#555"/></svg>
<svg class="abs" style="left:909.8px;top:444.4px;" width="16.8" height="17.6" viewBox="0 0 16.80 17.60"><rect x="0.5" y="1.0" width="15.8" height="15.6" fill="#dcdcdd" stroke="#8c8c8d" stroke-width="0.9"/><rect x="5.4" y="5.4" width="6.0" height="6.8" fill="#c4c4c5" stroke="#8c8c8d" stroke-width="0.9"/><path d="M8.4 1.8 L8.4 3.4" stroke="#555" stroke-width="0.8"/><path d="M8.4 4.2 L7.1 2.2 L9.7 2.2 Z" fill="#555"/><path d="M8.4 15.8 L8.4 14.2" stroke="#555" stroke-width="0.8"/><path d="M8.4 13.4 L9.7 15.4 L7.1 15.4 Z" fill="#555"/><path d="M1.6 8.8 L3.4 8.8" stroke="#555" stroke-width="0.8"/><path d="M4.2 8.8 L2.2 10.1 L2.2 7.5 Z" fill="#555"/><path d="M15.2 8.8 L13.4 8.8" stroke="#555" stroke-width="0.8"/><path d="M12.6 8.8 L14.6 7.5 L14.6 10.1 Z" fill="#555"/></svg>
<svg class="abs" style="left:936.7px;top:444.4px;" width="16.2" height="17.6" viewBox="0 0 16.20 17.60"><rect x="2.0" y="0.6" width="12.0" height="6.0" fill="#b9b9ba" stroke="#8c8c8d" stroke-width="0.9"/><rect x="4.6" y="10.4" width="6.6" height="6.4" fill="#b9b9ba" stroke="#8c8c8d" stroke-width="0.9"/><path d="M3.8 13.6 L2.0 13.6" stroke="#555" stroke-width="0.8"/><path d="M1.2 13.6 L3.2 12.3 L3.2 14.9 Z" fill="#555"/><path d="M12.0 13.6 L13.8 13.6" stroke="#555" stroke-width="0.8"/><path d="M14.6 13.6 L12.6 14.9 L12.6 12.3 Z" fill="#555"/></svg>
<svg class="abs" style="left:963.5px;top:444.4px;" width="16.2" height="17.6" viewBox="0 0 16.20 17.60"><rect x="9.4" y="1.0" width="6.0" height="15.6" fill="#b9b9ba" stroke="#8c8c8d" stroke-width="0.9"/><rect x="1.6" y="5.6" width="5.0" height="6.4" fill="#b9b9ba" stroke="#8c8c8d" stroke-width="0.9"/><path d="M4.1 4.8 L4.1 3.0" stroke="#555" stroke-width="0.8"/><path d="M4.1 2.2 L5.4 4.2 L2.8 4.2 Z" fill="#555"/><path d="M4.1 12.8 L4.1 14.6" stroke="#555" stroke-width="0.8"/><path d="M4.1 15.4 L2.8 13.4 L5.4 13.4 Z" fill="#555"/></svg>
<div class="abs" style="left:823.0px;top:468.8px;width:177.0px;height:10.2px;background:#d6d6d7;"></div>
<span class="t" style="left:827.0px;top:470.1px;font-size:7.2px;color:#3a3a3a;letter-spacing:-0.04px;">Layer</span>
<svg class="abs" style="left:827.0px;top:485.0px;" width="24.8" height="20.4" viewBox="0 0 24.80 20.40"><rect x="0.5" y="0.5" width="23.8" height="19.4" fill="#efeff0" stroke="#7a7a7b" stroke-width="0.9"/><rect x="5.4" y="4.6" width="14.0" height="11.2" fill="#a9a9aa" stroke="#777" stroke-width="0.9"/><path d="M2 2 L4.6 4 M22.8 2 L20.2 4 M2 18.4 L4.6 16.4 M22.8 18.4 L20.2 16.4" stroke="#555" stroke-width="0.9"/></svg>
<svg class="abs" style="left:860.4px;top:486.0px;" width="19.2" height="19.4" viewBox="0 0 19.20 19.40"><rect x="0.6" y="0.6" width="12.4" height="10" rx="1.2" fill="#dededf" stroke="#8a8a8b" stroke-width="0.9"/><rect x="4.0" y="4.2" width="12.4" height="10" rx="1.2" fill="#dededf" stroke="#8a8a8b" stroke-width="0.9"/><rect x="7.4" y="7.8" width="12.4" height="10" rx="1.2" fill="#dededf" stroke="#8a8a8b" stroke-width="0.9"/></svg>
<svg class="abs" style="left:889.4px;top:486.0px;" width="20.1" height="19.4" viewBox="0 0 20.10 19.40"><rect x="0.6" y="0.6" width="12.4" height="10" rx="1.2" fill="#dededf" stroke="#8a8a8b" stroke-width="0.9"/><rect x="4.0" y="4.2" width="12.4" height="10" rx="1.2" fill="#dededf" stroke="#8a8a8b" stroke-width="0.9"/><rect x="7.4" y="7.8" width="12.4" height="10" rx="1.2" fill="#dededf" stroke="#8a8a8b" stroke-width="0.9"/><path d="M1.6 14.4 L1.6 16.8" stroke="#777" stroke-width="0.8"/><path d="M1.6 17.6 L0.3 15.6 L2.9 15.6 Z" fill="#777"/></svg>
<svg class="abs" style="left:918.6px;top:486.0px;" width="19.3" height="19.4" viewBox="0 0 19.30 19.40"><rect x="0.6" y="0.6" width="12.4" height="10" rx="1.2" fill="#dededf" stroke="#8a8a8b" stroke-width="0.9"/><rect x="4.0" y="4.2" width="12.4" height="10" rx="1.2" fill="#dededf" stroke="#8a8a8b" stroke-width="0.9"/><rect x="7.4" y="7.8" width="12.4" height="10" rx="1.2" fill="#dededf" stroke="#8a8a8b" stroke-width="0.9"/><path d="M1.6 16.8 L1.6 14.4" stroke="#777" stroke-width="0.8"/><path d="M1.6 13.6 L2.9 15.6 L0.3 15.6 Z" fill="#777"/></svg>
<svg class="abs" style="left:948.2px;top:486.0px;" width="19.3" height="19.4" viewBox="0 0 19.30 19.40"><rect x="0.6" y="0.6" width="12.4" height="10" rx="1.2" fill="#dededf" stroke="#8a8a8b" stroke-width="0.9"/><rect x="4.0" y="4.2" width="12.4" height="10" rx="1.2" fill="#dededf" stroke="#8a8a8b" stroke-width="0.9"/><rect x="7.4" y="7.8" width="12.4" height="10" rx="1.2" fill="#b4b4b5" stroke="#8a8a8b" stroke-width="0.9"/></svg>
</div>
</body>
</html>
